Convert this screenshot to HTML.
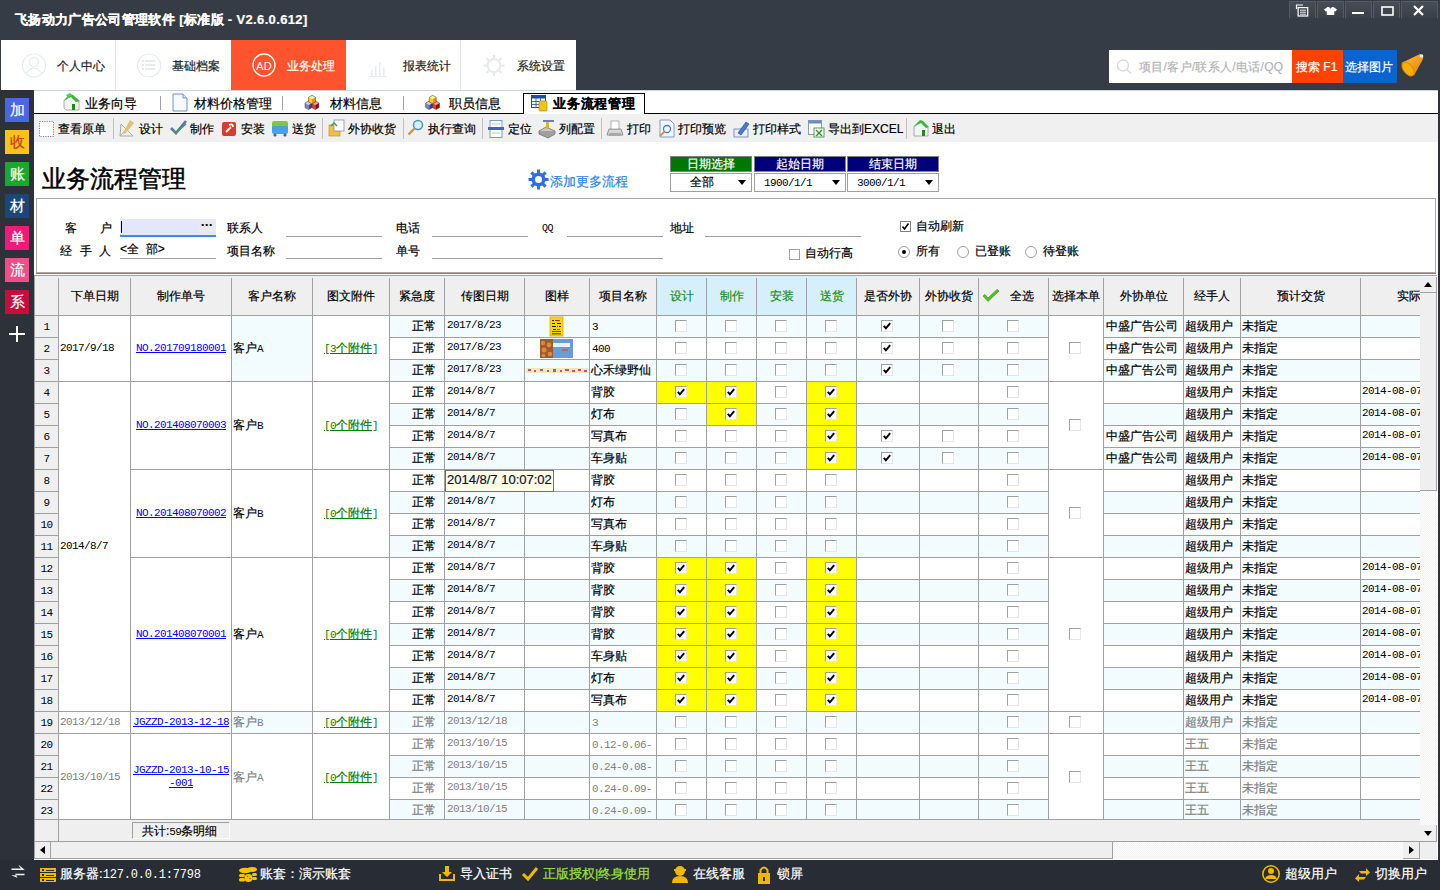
<!DOCTYPE html><html><head><meta charset="utf-8"><style>
*{box-sizing:border-box;margin:0;padding:0}
html,body{width:1440px;height:890px;overflow:hidden;background:#2c313a;font-family:"Liberation Sans",sans-serif;font-size:12px;color:#000;-webkit-text-stroke-width:0.2px}
.ab{position:absolute}
.m{font-family:"Liberation Mono",monospace;font-size:11px;letter-spacing:-0.6px;-webkit-text-stroke-width:0}
.t{position:absolute;white-space:nowrap;line-height:14px}
</style></head><body>

<div class="ab" style="left:0;top:0;width:1440px;height:90px;background:#363c46"></div>
<div class="t" style="left:15px;top:12px;color:#fff;font-weight:bold;font-size:13px;line-height:16px;letter-spacing:0.35px">飞扬动力广告公司管理软件 [标准版 - V2.6.0.612]</div>
<div class="ab" style="left:1289px;top:1px;width:27px;height:17px;border:1px solid #555b65;border-bottom:none;background:linear-gradient(#474d57,#394049)"></div>
<div class="ab" style="left:1317px;top:1px;width:27px;height:17px;border:1px solid #555b65;border-bottom:none;background:linear-gradient(#474d57,#394049)"></div>
<div class="ab" style="left:1345px;top:1px;width:27px;height:17px;border:1px solid #555b65;border-bottom:none;background:linear-gradient(#474d57,#394049)"></div>
<div class="ab" style="left:1373px;top:1px;width:27px;height:17px;border:1px solid #555b65;border-bottom:none;background:linear-gradient(#474d57,#394049)"></div>
<div class="ab" style="left:1401px;top:1px;width:37px;height:17px;border:1px solid #555b65;border-bottom:none;background:linear-gradient(#474d57,#394049)"></div>
<svg class="ab" style="left:1290px;top:0" width="150" height="22" viewBox="0 0 150 22">
<g fill="none" stroke="#fff" stroke-width="1.2">
<rect x="8.1" y="7.6" width="9.6" height="8.4"/><path d="M6.5 9 L6.5 5 L13 5"/></g>
<g stroke="#fff" stroke-width="0.9"><line x1="10" y1="10.2" x2="16" y2="10.2"/><line x1="10" y1="12.2" x2="16" y2="12.2"/><line x1="10" y1="14.2" x2="16" y2="14.2"/></g>
<path d="M34 9.5 L37.5 7 L39 7 L40.5 8.7 L42 7 L43.5 7 L47 9.5 L45.5 11.5 L44.3 11 L44.3 15 L36.7 15 L36.7 11 L35.5 11.5 Z" fill="#fff"/>
<rect x="62" y="12" width="12" height="2" fill="#fff"/>
<rect x="92" y="7" width="11" height="8" fill="none" stroke="#fff" stroke-width="1.6"/>
<path d="M124 6 L133 15 M133 6 L124 15" stroke="#fff" stroke-width="2.2"/>
</svg>
<div class="ab" style="left:1px;top:40px;width:575px;height:50px;background:#fff"></div>
<div class="t" style="left:57px;top:59px;font-size:12px;color:#222">个人中心</div>
<div class="ab" style="left:115px;top:40px;width:1px;height:50px;background:#e3e6ea"></div>
<div class="t" style="left:172px;top:59px;font-size:12px;color:#222">基础档案</div>
<div class="ab" style="left:231px;top:40px;width:115px;height:50px;background:#fe532d"></div>
<div class="t" style="left:287px;top:59px;font-size:12px;color:#fff">业务处理</div>
<div class="t" style="left:403px;top:59px;font-size:12px;color:#222">报表统计</div>
<div class="ab" style="left:460px;top:40px;width:1px;height:50px;background:#e3e6ea"></div>
<div class="t" style="left:517px;top:59px;font-size:12px;color:#222">系统设置</div>
<svg class="ab" style="left:0;top:40px" width="576" height="50" viewBox="0 0 576 50">
<g fill="none" stroke="#e6eaec" stroke-width="1.2">
<circle cx="34" cy="25.5" r="11.5"/><circle cx="34" cy="22" r="4.5"/><path d="M26.5 33 Q34 23 41.5 33"/>
<circle cx="149" cy="25.5" r="11.5"/>
</g>
<g fill="#e6eaec"><rect x="142" y="20" width="2" height="2"/><rect x="145" y="20" width="10" height="2"/><rect x="142" y="24" width="2" height="2"/><rect x="145" y="24" width="10" height="2"/><rect x="142" y="28" width="2" height="2"/><rect x="145" y="28" width="10" height="2"/></g>
<circle cx="264" cy="25" r="11" fill="none" stroke="#fff" stroke-width="1.3"/>
<text x="264" y="29.5" font-size="11" fill="#fff" text-anchor="middle" font-family="Liberation Sans">AD</text>
<g fill="#e8ecee"><rect x="371" y="30" width="1.5" height="6"/><rect x="375" y="26" width="1.5" height="10"/><rect x="379" y="22" width="1.5" height="14"/><rect x="383" y="27" width="1.5" height="9"/><rect x="369" y="36" width="18" height="1"/></g>
<g fill="none" stroke="#e6eaec" stroke-width="2"><circle cx="494" cy="25.5" r="6.5"/></g>
<g stroke="#e6eaec" stroke-width="2.2"><line x1="494" y1="15" x2="494" y2="18"/><line x1="494" y1="33" x2="494" y2="36"/><line x1="483.5" y1="25.5" x2="486.5" y2="25.5"/><line x1="501.5" y1="25.5" x2="504.5" y2="25.5"/><line x1="486.6" y1="18.1" x2="488.7" y2="20.2"/><line x1="499.3" y1="30.8" x2="501.4" y2="32.9"/><line x1="501.4" y1="18.1" x2="499.3" y2="20.2"/><line x1="488.7" y1="30.8" x2="486.6" y2="32.9"/></g>
</svg>
<div class="ab" style="left:1109px;top:50px;width:183px;height:33px;background:#fff"></div>
<svg class="ab" style="left:1115px;top:57px" width="20" height="20"><circle cx="8" cy="8.5" r="5.5" fill="none" stroke="#d8d8d8" stroke-width="1.3"/><line x1="12" y1="12.5" x2="16" y2="16.5" stroke="#d8d8d8" stroke-width="1.5"/></svg>
<div class="t" style="left:1139px;top:60px;color:#b4b4b4;font-size:12px;letter-spacing:0.3px">项目/客户/联系人/电话/QQ</div>
<div class="ab" style="left:1292px;top:50px;width:51px;height:33px;background:#ff4200"></div>
<div class="t" style="left:1296px;top:60px;color:#fff;font-size:12px">搜索 F1</div>
<div class="ab" style="left:1343px;top:50px;width:54px;height:33px;background:#0a64d0"></div>
<div class="t" style="left:1345px;top:60px;color:#fff;font-size:12px">选择图片</div>
<svg class="ab" style="left:1395px;top:45px" width="40" height="40" viewBox="0 0 40 40">
<defs><linearGradient id="mg" x1="0" y1="0" x2="1" y2="1"><stop offset="0" stop-color="#ffc640"/><stop offset="1" stop-color="#e87800"/></linearGradient></defs>
<path d="M6.5 18 L25 9 Q29 10 28 14 L19 30.5 Z" fill="url(#mg)"/>
<ellipse cx="13" cy="24" rx="8" ry="4.5" transform="rotate(52 13 24)" fill="#f7b000" stroke="#e08a00" stroke-width="1"/>
<circle cx="26.5" cy="11" r="1.8" fill="#e8eef8"/>
</svg>
<div class="ab" style="left:5px;top:98px;width:24px;height:24px;background:#4a66e0;color:#fff;font-size:15px;line-height:24px;text-align:center">加</div>
<div class="ab" style="left:5px;top:130px;width:24px;height:24px;background:#f7c21a;color:#c8391a;font-size:15px;line-height:24px;text-align:center">收</div>
<div class="ab" style="left:5px;top:162px;width:24px;height:24px;background:#18a82b;color:#fff;font-size:15px;line-height:24px;text-align:center">账</div>
<div class="ab" style="left:5px;top:194px;width:24px;height:24px;background:#1b4677;color:#fff;font-size:15px;line-height:24px;text-align:center">材</div>
<div class="ab" style="left:5px;top:226px;width:24px;height:24px;background:#ee1c78;color:#fff;font-size:15px;line-height:24px;text-align:center">单</div>
<div class="ab" style="left:5px;top:258px;width:24px;height:24px;background:#ee4f88;color:#fff;font-size:15px;line-height:24px;text-align:center">流</div>
<div class="ab" style="left:5px;top:290px;width:24px;height:24px;background:#c20f3c;color:#fff;font-size:15px;line-height:24px;text-align:center">系</div>
<div class="ab" style="left:9px;top:333px;width:16px;height:2px;background:#fff"></div>
<div class="ab" style="left:16px;top:326px;width:2px;height:16px;background:#fff"></div>
<div class="ab" style="left:34px;top:90px;width:1404px;height:770px;background:#fff"></div>
<div class="ab" style="left:34px;top:90px;width:1404px;height:1px;background:#c8d4e0"></div>
<div class="ab" style="left:34px;top:113px;width:1404px;height:1px;background:#000"></div>
<div class="t" style="left:85px;top:97px;font-size:13px">业务向导</div>
<div class="t" style="left:194px;top:97px;font-size:13px">材料价格管理</div>
<div class="t" style="left:330px;top:97px;font-size:13px">材料信息</div>
<div class="t" style="left:449px;top:97px;font-size:13px">职员信息</div>
<div class="ab" style="left:160px;top:96px;width:1px;height:14px;background:#a0a0a0"></div>
<div class="ab" style="left:282px;top:96px;width:1px;height:14px;background:#a0a0a0"></div>
<div class="ab" style="left:403px;top:96px;width:1px;height:14px;background:#a0a0a0"></div>
<div class="ab" style="left:523px;top:93px;width:122px;height:21px;background:#fff;border:1px solid #000;border-bottom:none"></div>
<div class="t" style="left:553px;top:97px;font-size:13px;font-weight:bold;letter-spacing:0.8px">业务流程管理</div>
<svg class="ab" style="left:0;top:90px" width="660" height="24" viewBox="0 0 660 24">
<path d="M64 11 L71 5 L79 11 L79 20 L66 20 L64 18 Z" fill="#f4f4f4" stroke="#9a9a9a" stroke-width="0.8"/>
<path d="M63 11 L70 4 L73 5 L80 11 L76 12 L71 7 Z" fill="#3cb43c"/><path d="M66 5 L70 3 L72 5 L68 8Z" fill="#52d052"/>
<rect x="72" y="14" width="3" height="6" fill="#1e8a1e"/>
<path d="M173 4 L183 4 L187 8 L187 21 L173 21 Z" fill="#f6f9ff" stroke="#5b83c6" stroke-width="0.9"/><path d="M183 4 L183 8 L187 8" fill="#dbe6f8" stroke="#5b83c6" stroke-width="0.8"/>
<g><path d="M308.5 11 L312.0 13 L308.5 15 L305.0 13Z" fill="#d0d0f0"/><path d="M305.0 13 L308.5 15 L308.5 19.6 L305.0 17.6Z" fill="#8080c8"/><path d="M308.5 15 L312.0 13 L312.0 17.6 L308.5 19.6Z" fill="#404090"/><path d="M308.5 11 L312.0 13 L312.0 17.6 L308.5 19.6 L305.0 17.6 L305.0 13Z" fill="none" stroke="#303030" stroke-width="0.5"/><path d="M315.3 11 L318.8 13 L315.3 15 L311.8 13Z" fill="#f0a0a0"/><path d="M311.8 13 L315.3 15 L315.3 19.6 L311.8 17.6Z" fill="#d04040"/><path d="M315.3 15 L318.8 13 L318.8 17.6 L315.3 19.6Z" fill="#a00000"/><path d="M315.3 11 L318.8 13 L318.8 17.6 L315.3 19.6 L311.8 17.6 L311.8 13Z" fill="none" stroke="#303030" stroke-width="0.5"/><path d="M312 5.3 L315.5 7.3 L312 9.3 L308.5 7.3Z" fill="#fff0a0"/><path d="M308.5 7.3 L312 9.3 L312 13.899999999999999 L308.5 11.899999999999999Z" fill="#f8d000"/><path d="M312 9.3 L315.5 7.3 L315.5 11.899999999999999 L312 13.899999999999999Z" fill="#f09010"/><path d="M312 5.3 L315.5 7.3 L315.5 11.899999999999999 L312 13.899999999999999 L308.5 11.899999999999999 L308.5 7.3Z" fill="none" stroke="#303030" stroke-width="0.5"/></g>
<g><path d="M429.2 11 L432.7 13 L429.2 15 L425.7 13Z" fill="#d0d0f0"/><path d="M425.7 13 L429.2 15 L429.2 19.6 L425.7 17.6Z" fill="#8080c8"/><path d="M429.2 15 L432.7 13 L432.7 17.6 L429.2 19.6Z" fill="#404090"/><path d="M429.2 11 L432.7 13 L432.7 17.6 L429.2 19.6 L425.7 17.6 L425.7 13Z" fill="none" stroke="#303030" stroke-width="0.5"/><path d="M436.0 11 L439.5 13 L436.0 15 L432.5 13Z" fill="#f0a0a0"/><path d="M432.5 13 L436.0 15 L436.0 19.6 L432.5 17.6Z" fill="#d04040"/><path d="M436.0 15 L439.5 13 L439.5 17.6 L436.0 19.6Z" fill="#a00000"/><path d="M436.0 11 L439.5 13 L439.5 17.6 L436.0 19.6 L432.5 17.6 L432.5 13Z" fill="none" stroke="#303030" stroke-width="0.5"/><path d="M432.7 5.3 L436.2 7.3 L432.7 9.3 L429.2 7.3Z" fill="#fff0a0"/><path d="M429.2 7.3 L432.7 9.3 L432.7 13.899999999999999 L429.2 11.899999999999999Z" fill="#f8d000"/><path d="M432.7 9.3 L436.2 7.3 L436.2 11.899999999999999 L432.7 13.899999999999999Z" fill="#f09010"/><path d="M432.7 5.3 L436.2 7.3 L436.2 11.899999999999999 L432.7 13.899999999999999 L429.2 11.899999999999999 L429.2 7.3Z" fill="none" stroke="#303030" stroke-width="0.5"/></g>
<rect x="531.5" y="5.5" width="14" height="12" fill="#fff" stroke="#1a4fa0" stroke-width="1"/><rect x="531.5" y="5.5" width="14" height="3" fill="#1a4fa0"/>
<g stroke="#1a4fa0" stroke-width="0.8"><line x1="536" y1="8" x2="536" y2="17"/><line x1="540.5" y1="8" x2="540.5" y2="17"/><line x1="532" y1="11.5" x2="545" y2="11.5"/><line x1="532" y1="14.5" x2="545" y2="14.5"/></g>
<rect x="539" y="11" width="8" height="10" rx="1" fill="#f2c318" stroke="#b08000" stroke-width="0.6"/>
</svg>
<div class="ab" style="left:34px;top:114px;width:1404px;height:28px;background:#f0f0f0"></div>
<div class="t" style="left:58px;top:122px;font-size:12px">查看原单</div>
<div class="t" style="left:139px;top:122px;font-size:12px">设计</div>
<div class="t" style="left:190px;top:122px;font-size:12px">制作</div>
<div class="t" style="left:241px;top:122px;font-size:12px">安装</div>
<div class="t" style="left:292px;top:122px;font-size:12px">送货</div>
<div class="t" style="left:348px;top:122px;font-size:12px">外协收货</div>
<div class="t" style="left:428px;top:122px;font-size:12px">执行查询</div>
<div class="t" style="left:508px;top:122px;font-size:12px">定位</div>
<div class="t" style="left:559px;top:122px;font-size:12px">列配置</div>
<div class="t" style="left:627px;top:122px;font-size:12px">打印</div>
<div class="t" style="left:678px;top:122px;font-size:12px">打印预览</div>
<div class="t" style="left:753px;top:122px;font-size:12px">打印样式</div>
<div class="t" style="left:828px;top:122px;font-size:12px">导出到EXCEL</div>
<div class="t" style="left:932px;top:122px;font-size:12px">退出</div>
<div class="ab" style="left:113px;top:118px;width:1px;height:21px;background:#c0c0c0"></div>
<div class="ab" style="left:322px;top:118px;width:1px;height:21px;background:#c0c0c0"></div>
<div class="ab" style="left:403px;top:118px;width:1px;height:21px;background:#c0c0c0"></div>
<div class="ab" style="left:482px;top:118px;width:1px;height:21px;background:#c0c0c0"></div>
<div class="ab" style="left:601px;top:118px;width:1px;height:21px;background:#c0c0c0"></div>
<div class="ab" style="left:906px;top:118px;width:1px;height:21px;background:#c0c0c0"></div>
<svg class="ab" style="left:0;top:114px" width="960" height="28" viewBox="0 0 960 28">
<rect x="39.5" y="7.5" width="14" height="15" fill="#fff" stroke="#7080c0" stroke-width="1" stroke-dasharray="1.2 1.2"/>
<path d="M120 22 L133 8 M121 10 L133 22 L120 22 Z" fill="none" stroke="#a8a8a8" stroke-width="1"/><path d="M130 6 L134 9 L126 19 L123 20 L124 17Z" fill="#e6c070"/>
<path d="M171 14 L176 19 L186 7" fill="none" stroke="#5a6cc8" stroke-width="2.6"/><path d="M173 16 L176 19 L186 10" fill="none" stroke="#3ea83e" stroke-width="1.6"/>
<rect x="222" y="8" width="14" height="14" rx="2" fill="#d83c2c"/><path d="M226 18 L231 13 M229 11 Q233 9 233 13" stroke="#fff" stroke-width="1.8" fill="none"/>
<rect x="272" y="7" width="16" height="10" rx="2" fill="#7ac84a"/><rect x="272" y="12" width="16" height="8" rx="2" fill="#4aa0e0"/><circle cx="275" cy="21" r="1.6" fill="#3070a0"/><circle cx="285" cy="21" r="1.6" fill="#3070a0"/>
<rect x="329" y="11" width="11" height="11" fill="#f0c040" stroke="#c09020" stroke-width="0.7"/><rect x="334" y="6" width="10" height="11" fill="#fff" stroke="#8090b0" stroke-width="0.8"/><path d="M331 12 L334 9 L337 12" stroke="#40a040" stroke-width="1.4" fill="none"/>
<circle cx="418" cy="11" r="4.5" fill="#dcefff" stroke="#4a90d0" stroke-width="1.5"/><line x1="414.5" y1="14.5" x2="408.5" y2="20.5" stroke="#e09030" stroke-width="2.4"/>
<rect x="490" y="6.5" width="12" height="17" fill="#fff" stroke="#7090c8" stroke-width="0.9"/><rect x="488" y="13" width="16" height="3" fill="#3a68c0"/><g stroke="#a0b4d8" stroke-width="0.8"><line x1="492" y1="10" x2="500" y2="10"/><line x1="492" y1="19" x2="500" y2="19"/></g>
<path d="M539 17 L546 13 L555 17 L548 21 Z" fill="#c8c8c8" stroke="#707070" stroke-width="0.8"/><path d="M539 17 L539 20 L548 24 L555 20 L555 17" fill="#a0a0a0" stroke="#707070" stroke-width="0.8"/><rect x="543" y="6" width="11" height="2" fill="#6080c0"/><rect x="546" y="8" width="3" height="7" fill="#e0b030"/>
<path d="M609 15 L621 15 L623 21 L607 21 Z" fill="#d8d8d8" stroke="#808080" stroke-width="0.8"/><rect x="611" y="7" width="8" height="8" fill="#fff" stroke="#909090" stroke-width="0.7"/><rect x="609" y="19" width="12" height="3" fill="#a8a8a8"/>
<path d="M660 6 L670 6 L674 10 L674 23 L660 23 Z" fill="#f4f8ff" stroke="#7090c0" stroke-width="0.9"/><circle cx="667" cy="15" r="3.5" fill="none" stroke="#4080c0" stroke-width="1.3"/><line x1="664.5" y1="17.5" x2="660" y2="22" stroke="#e09030" stroke-width="1.8"/>
<rect x="734" y="15" width="14" height="8" fill="#e8eef8" stroke="#6080b0" stroke-width="0.8"/><path d="M738 19 L746 8 L749 10 L741 21 Z" fill="#4a7ad8" stroke="#204080" stroke-width="0.6"/>
<rect x="808.5" y="6.5" width="13" height="14" fill="#fff" stroke="#8094b0" stroke-width="0.9"/><rect x="808.5" y="6.5" width="13" height="3" fill="#6a8cc0"/><rect x="814" y="14" width="10" height="9" fill="#fff" stroke="#3a9a3a" stroke-width="0.9"/><path d="M816 16 L822 22 M822 16 L816 22" stroke="#2a8a2a" stroke-width="1.2"/>
<path d="M914 13 L921 7 L928 13 L928 22 L914 22 Z" fill="#f4f4f4" stroke="#9a9a9a" stroke-width="0.8"/><path d="M913 13 L920 6 L923 7 L929 13 L926 14 L921 9 Z" fill="#3cb43c"/><rect x="922" y="16" width="3" height="6" fill="#1e8a1e"/>
</svg>
<div class="t" style="left:42px;top:164px;font-size:24px;line-height:30px;-webkit-text-stroke-width:0.5px">业务流程管理</div>
<svg class="ab" style="left:528px;top:169px" width="21" height="21" viewBox="0 0 21 21">
<g fill="#2f6fe0"><circle cx="10.5" cy="10.5" r="7"/>
<g stroke="#2f6fe0" stroke-width="3"><line x1="10.5" y1="0.5" x2="10.5" y2="20.5"/><line x1="0.5" y1="10.5" x2="20.5" y2="10.5"/><line x1="3.4" y1="3.4" x2="17.6" y2="17.6"/><line x1="17.6" y1="3.4" x2="3.4" y2="17.6"/></g></g>
<circle cx="10.5" cy="10.5" r="3.5" fill="#fff"/></svg>
<div class="t" style="left:550px;top:175px;font-size:13px;color:#2a86e6">添加更多流程</div>
<div class="ab" style="left:670px;top:156px;width:82px;height:16px;background:#007800;border:1px solid #808080;color:#fff;text-align:center;font-size:12px;line-height:14px">日期选择</div>
<div class="ab" style="left:670px;top:173px;width:82px;height:19px;background:#fff;border:1px solid #a0a0a0"></div>
<div class="t" style="left:690px;top:175px;font-size:12px">全部</div>
<div class="ab" style="left:738px;top:180px;width:0;height:0;border-left:4.5px solid transparent;border-right:4.5px solid transparent;border-top:5px solid #000"></div>
<div class="ab" style="left:754px;top:156px;width:92px;height:16px;background:#000078;border:1px solid #808080;color:#fff;text-align:center;font-size:12px;line-height:14px">起始日期</div>
<div class="ab" style="left:754px;top:173px;width:92px;height:19px;background:#fff;border:1px solid #a0a0a0"></div>
<div class="t m" style="left:764px;top:176px;font-size:11px">1900/1/1</div>
<div class="ab" style="left:832px;top:180px;width:0;height:0;border-left:4.5px solid transparent;border-right:4.5px solid transparent;border-top:5px solid #000"></div>
<div class="ab" style="left:847px;top:156px;width:92px;height:16px;background:#000078;border:1px solid #808080;color:#fff;text-align:center;font-size:12px;line-height:14px">结束日期</div>
<div class="ab" style="left:847px;top:173px;width:92px;height:19px;background:#fff;border:1px solid #a0a0a0"></div>
<div class="t m" style="left:857px;top:176px;font-size:11px">3000/1/1</div>
<div class="ab" style="left:925px;top:180px;width:0;height:0;border-left:4.5px solid transparent;border-right:4.5px solid transparent;border-top:5px solid #000"></div>
<div class="ab" style="left:36px;top:198px;width:1400px;height:75px;border:1px solid #a8a8a8;border-bottom-color:#b0a89c"></div>
<div class="ab" style="left:36px;top:273px;width:1400px;height:1px;background:#3a8ee6"></div>
<div class="t" style="left:65px;top:221px">客</div><div class="t" style="left:100px;top:221px">户</div>
<div class="ab" style="left:120px;top:219px;width:96px;height:18px;background:#e3e7fb;border-bottom:2px solid #3a8ee6"></div>
<div class="ab" style="left:199px;top:219px;width:17px;height:16px;background:#e8eaf0"></div>
<div class="t" style="left:201px;top:218px;font-weight:bold;font-size:12px">···</div>
<div class="ab" style="left:121px;top:221px;width:1px;height:12px;background:#000"></div>
<div class="t" style="left:60px;top:244px">经</div><div class="t" style="left:80px;top:244px">手</div><div class="t" style="left:99px;top:244px">人</div>
<div class="t" style="left:120px;top:242px">&lt;全&nbsp;&nbsp;部&gt;</div>
<div class="t" style="left:227px;top:221px">联系人</div>
<div class="t" style="left:227px;top:244px">项目名称</div>
<div class="t" style="left:396px;top:221px">电话</div>
<div class="t" style="left:396px;top:244px">单号</div>
<div class="t" style="left:670px;top:221px">地址</div>
<div class="t m" style="left:542px;top:222px;font-size:10px">QQ</div>
<div class="ab" style="left:120px;top:258px;width:96px;height:1px;background:#a0a0a0"></div>
<div class="ab" style="left:286px;top:236px;width:96px;height:1px;background:#a0a0a0"></div>
<div class="ab" style="left:286px;top:258px;width:96px;height:1px;background:#a0a0a0"></div>
<div class="ab" style="left:432px;top:236px;width:96px;height:1px;background:#a0a0a0"></div>
<div class="ab" style="left:567px;top:236px;width:96px;height:1px;background:#a0a0a0"></div>
<div class="ab" style="left:705px;top:236px;width:156px;height:1px;background:#a0a0a0"></div>
<div class="ab" style="left:432px;top:258px;width:231px;height:1px;background:#a0a0a0"></div>
<div class="ab" style="left:900px;top:221px;width:11px;height:11px;border:1px solid #808080;background:#fff"></div>
<svg class="ab" style="left:900px;top:221px" width="11" height="11"><path d="M2.5 5.5 L4.5 8 L8.5 2.5" fill="none" stroke="#000" stroke-width="1.6"/></svg>
<div class="t" style="left:916px;top:219px">自动刷新</div>
<div class="ab" style="left:789px;top:249px;width:11px;height:11px;border:1px solid #a0a0a0;background:#fff"></div>
<div class="t" style="left:805px;top:246px">自动行高</div>
<div class="ab" style="left:898px;top:246px;width:12px;height:12px;border-radius:50%;border:1px solid #a0a0a0;background:#fff"></div>
<div class="ab" style="left:902px;top:250px;width:4px;height:4px;border-radius:50%;background:#000"></div>
<div class="t" style="left:916px;top:244px">所有</div>
<div class="ab" style="left:957px;top:246px;width:12px;height:12px;border-radius:50%;border:1px solid #a0a0a0;background:#fff"></div>
<div class="t" style="left:975px;top:244px">已登账</div>
<div class="ab" style="left:1025px;top:246px;width:12px;height:12px;border-radius:50%;border:1px solid #a0a0a0;background:#fff"></div>
<div class="t" style="left:1043px;top:244px">待登账</div>
<div class="ab" style="left:34px;top:275px;width:1403px;height:1px;background:#a0a0a0"></div>
<div class="ab" style="left:34px;top:275px;width:1px;height:584px;background:#a0a0a0"></div>
<div class="ab" style="left:35px;top:276px;width:1385px;height:39px;background:#efefef"></div>
<div class="ab" style="left:657px;top:276px;width:199px;height:39px;background:#d5f0fb"></div>
<div class="ab" style="left:59px;top:289px;width:71px;text-align:center;line-height:14px;color:#000;white-space:nowrap">下单日期</div>
<div class="ab" style="left:131px;top:289px;width:100px;text-align:center;line-height:14px;color:#000;white-space:nowrap">制作单号</div>
<div class="ab" style="left:232px;top:289px;width:80px;text-align:center;line-height:14px;color:#000;white-space:nowrap">客户名称</div>
<div class="ab" style="left:313px;top:289px;width:76px;text-align:center;line-height:14px;color:#000;white-space:nowrap">图文附件</div>
<div class="ab" style="left:390px;top:289px;width:54px;text-align:center;line-height:14px;color:#000;white-space:nowrap">紧急度</div>
<div class="ab" style="left:445px;top:289px;width:79px;text-align:center;line-height:14px;color:#000;white-space:nowrap">传图日期</div>
<div class="ab" style="left:525px;top:289px;width:64px;text-align:center;line-height:14px;color:#000;white-space:nowrap">图样</div>
<div class="ab" style="left:590px;top:289px;width:66px;text-align:center;line-height:14px;color:#000;white-space:nowrap">项目名称</div>
<div class="ab" style="left:657px;top:289px;width:49px;text-align:center;line-height:14px;color:#1e8c1e;white-space:nowrap">设计</div>
<div class="ab" style="left:707px;top:289px;width:49px;text-align:center;line-height:14px;color:#1e8c1e;white-space:nowrap">制作</div>
<div class="ab" style="left:757px;top:289px;width:49px;text-align:center;line-height:14px;color:#1e8c1e;white-space:nowrap">安装</div>
<div class="ab" style="left:807px;top:289px;width:49px;text-align:center;line-height:14px;color:#1e8c1e;white-space:nowrap">送货</div>
<div class="ab" style="left:857px;top:289px;width:62px;text-align:center;line-height:14px;color:#000;white-space:nowrap">是否外协</div>
<div class="ab" style="left:920px;top:289px;width:58px;text-align:center;line-height:14px;color:#000;white-space:nowrap">外协收货</div>
<div class="t" style="left:1010px;top:289px">全选</div>
<svg class="ab" style="left:982px;top:289px" width="18" height="15" viewBox="0 0 18 15"><path d="M1 7 L6 12.5 L17 2 L15 0.5 L6 9 L3 5.5 Z" fill="#52c41a" stroke="#2e8a10" stroke-width="0.6"/></svg>
<div class="ab" style="left:1049px;top:289px;width:54px;text-align:center;line-height:14px;color:#000;white-space:nowrap">选择本单</div>
<div class="ab" style="left:1104px;top:289px;width:79px;text-align:center;line-height:14px;color:#000;white-space:nowrap">外协单位</div>
<div class="ab" style="left:1184px;top:289px;width:56px;text-align:center;line-height:14px;color:#000;white-space:nowrap">经手人</div>
<div class="ab" style="left:1241px;top:289px;width:119px;text-align:center;line-height:14px;color:#000;white-space:nowrap">预计交货</div>
<div class="ab" style="left:1361px;top:276px;width:59px;height:39px;overflow:hidden"><div class="t" style="left:36px;top:13px">实际交货</div></div>
<div class="ab" style="left:58px;top:278px;width:1px;height:37px;background:#a0a0a0"></div>
<div class="ab" style="left:130px;top:278px;width:1px;height:37px;background:#a0a0a0"></div>
<div class="ab" style="left:231px;top:278px;width:1px;height:37px;background:#a0a0a0"></div>
<div class="ab" style="left:312px;top:278px;width:1px;height:37px;background:#a0a0a0"></div>
<div class="ab" style="left:389px;top:278px;width:1px;height:37px;background:#a0a0a0"></div>
<div class="ab" style="left:444px;top:278px;width:1px;height:37px;background:#a0a0a0"></div>
<div class="ab" style="left:524px;top:278px;width:1px;height:37px;background:#a0a0a0"></div>
<div class="ab" style="left:589px;top:278px;width:1px;height:37px;background:#a0a0a0"></div>
<div class="ab" style="left:656px;top:278px;width:1px;height:37px;background:#a0a0a0"></div>
<div class="ab" style="left:706px;top:278px;width:1px;height:37px;background:#a0a0a0"></div>
<div class="ab" style="left:756px;top:278px;width:1px;height:37px;background:#a0a0a0"></div>
<div class="ab" style="left:806px;top:278px;width:1px;height:37px;background:#a0a0a0"></div>
<div class="ab" style="left:856px;top:278px;width:1px;height:37px;background:#a0a0a0"></div>
<div class="ab" style="left:919px;top:278px;width:1px;height:37px;background:#a0a0a0"></div>
<div class="ab" style="left:978px;top:278px;width:1px;height:37px;background:#a0a0a0"></div>
<div class="ab" style="left:1048px;top:278px;width:1px;height:37px;background:#a0a0a0"></div>
<div class="ab" style="left:1103px;top:278px;width:1px;height:37px;background:#a0a0a0"></div>
<div class="ab" style="left:1183px;top:278px;width:1px;height:37px;background:#a0a0a0"></div>
<div class="ab" style="left:1240px;top:278px;width:1px;height:37px;background:#a0a0a0"></div>
<div class="ab" style="left:1360px;top:278px;width:1px;height:37px;background:#a0a0a0"></div>
<div class="ab" style="left:34px;top:315px;width:1386px;height:1px;background:#a0a0a0"></div>
<div class="ab" style="left:35px;top:316px;width:1385px;height:503px;overflow:hidden;background:#fff">
<div class="ab" style="left:355px;top:0px;width:658px;height:21px;background:#f2fbfe"></div>
<div class="ab" style="left:1069px;top:0px;width:316px;height:21px;background:#f2fbfe"></div>
<div class="ab" style="left:355px;top:44px;width:658px;height:21px;background:#f2fbfe"></div>
<div class="ab" style="left:1069px;top:44px;width:316px;height:21px;background:#f2fbfe"></div>
<div class="ab" style="left:622px;top:66px;width:49px;height:21px;background:#ffff00"></div>
<div class="ab" style="left:672px;top:66px;width:49px;height:21px;background:#ffff00"></div>
<div class="ab" style="left:772px;top:66px;width:49px;height:21px;background:#ffff00"></div>
<div class="ab" style="left:355px;top:88px;width:658px;height:21px;background:#f2fbfe"></div>
<div class="ab" style="left:1069px;top:88px;width:316px;height:21px;background:#f2fbfe"></div>
<div class="ab" style="left:672px;top:88px;width:49px;height:21px;background:#ffff00"></div>
<div class="ab" style="left:772px;top:88px;width:49px;height:21px;background:#ffff00"></div>
<div class="ab" style="left:772px;top:110px;width:49px;height:21px;background:#ffff00"></div>
<div class="ab" style="left:355px;top:132px;width:658px;height:21px;background:#f2fbfe"></div>
<div class="ab" style="left:1069px;top:132px;width:316px;height:21px;background:#f2fbfe"></div>
<div class="ab" style="left:772px;top:132px;width:49px;height:21px;background:#ffff00"></div>
<div class="ab" style="left:355px;top:176px;width:658px;height:21px;background:#f2fbfe"></div>
<div class="ab" style="left:1069px;top:176px;width:316px;height:21px;background:#f2fbfe"></div>
<div class="ab" style="left:355px;top:220px;width:658px;height:21px;background:#f2fbfe"></div>
<div class="ab" style="left:1069px;top:220px;width:316px;height:21px;background:#f2fbfe"></div>
<div class="ab" style="left:622px;top:242px;width:49px;height:21px;background:#ffff00"></div>
<div class="ab" style="left:672px;top:242px;width:49px;height:21px;background:#ffff00"></div>
<div class="ab" style="left:772px;top:242px;width:49px;height:21px;background:#ffff00"></div>
<div class="ab" style="left:355px;top:264px;width:658px;height:21px;background:#f2fbfe"></div>
<div class="ab" style="left:1069px;top:264px;width:316px;height:21px;background:#f2fbfe"></div>
<div class="ab" style="left:622px;top:264px;width:49px;height:21px;background:#ffff00"></div>
<div class="ab" style="left:672px;top:264px;width:49px;height:21px;background:#ffff00"></div>
<div class="ab" style="left:772px;top:264px;width:49px;height:21px;background:#ffff00"></div>
<div class="ab" style="left:622px;top:286px;width:49px;height:21px;background:#ffff00"></div>
<div class="ab" style="left:672px;top:286px;width:49px;height:21px;background:#ffff00"></div>
<div class="ab" style="left:772px;top:286px;width:49px;height:21px;background:#ffff00"></div>
<div class="ab" style="left:355px;top:308px;width:658px;height:21px;background:#f2fbfe"></div>
<div class="ab" style="left:1069px;top:308px;width:316px;height:21px;background:#f2fbfe"></div>
<div class="ab" style="left:622px;top:308px;width:49px;height:21px;background:#ffff00"></div>
<div class="ab" style="left:672px;top:308px;width:49px;height:21px;background:#ffff00"></div>
<div class="ab" style="left:772px;top:308px;width:49px;height:21px;background:#ffff00"></div>
<div class="ab" style="left:622px;top:330px;width:49px;height:21px;background:#ffff00"></div>
<div class="ab" style="left:672px;top:330px;width:49px;height:21px;background:#ffff00"></div>
<div class="ab" style="left:772px;top:330px;width:49px;height:21px;background:#ffff00"></div>
<div class="ab" style="left:355px;top:352px;width:658px;height:21px;background:#f2fbfe"></div>
<div class="ab" style="left:1069px;top:352px;width:316px;height:21px;background:#f2fbfe"></div>
<div class="ab" style="left:622px;top:352px;width:49px;height:21px;background:#ffff00"></div>
<div class="ab" style="left:672px;top:352px;width:49px;height:21px;background:#ffff00"></div>
<div class="ab" style="left:772px;top:352px;width:49px;height:21px;background:#ffff00"></div>
<div class="ab" style="left:622px;top:374px;width:49px;height:21px;background:#ffff00"></div>
<div class="ab" style="left:672px;top:374px;width:49px;height:21px;background:#ffff00"></div>
<div class="ab" style="left:772px;top:374px;width:49px;height:21px;background:#ffff00"></div>
<div class="ab" style="left:355px;top:396px;width:658px;height:21px;background:#f2fbfe"></div>
<div class="ab" style="left:1069px;top:396px;width:316px;height:21px;background:#f2fbfe"></div>
<div class="ab" style="left:355px;top:440px;width:658px;height:21px;background:#f2fbfe"></div>
<div class="ab" style="left:1069px;top:440px;width:316px;height:21px;background:#f2fbfe"></div>
<div class="ab" style="left:355px;top:484px;width:658px;height:21px;background:#f2fbfe"></div>
<div class="ab" style="left:1069px;top:484px;width:316px;height:21px;background:#f2fbfe"></div>
<div class="ab" style="left:197px;top:0px;width:80px;height:65px;background:#f2fbfe"></div>
<div class="ab" style="left:197px;top:396px;width:80px;height:21px;background:#f2fbfe"></div>
<div class="ab" style="left:0px;top:0px;width:23px;height:503px;background:#efefef"></div>
<div class="ab" style="left:-1px;top:21px;width:24px;height:1px;background:#a0a0a0"></div>
<div class="ab" style="left:354px;top:21px;width:56px;height:1px;background:#a0a0a0"></div>
<div class="ab" style="left:409px;top:21px;width:81px;height:1px;background:#a0a0a0"></div>
<div class="ab" style="left:489px;top:21px;width:66px;height:1px;background:#a0a0a0"></div>
<div class="ab" style="left:554px;top:21px;width:68px;height:1px;background:#a0a0a0"></div>
<div class="ab" style="left:621px;top:21px;width:51px;height:1px;background:#a0a0a0"></div>
<div class="ab" style="left:671px;top:21px;width:51px;height:1px;background:#a0a0a0"></div>
<div class="ab" style="left:721px;top:21px;width:51px;height:1px;background:#a0a0a0"></div>
<div class="ab" style="left:771px;top:21px;width:51px;height:1px;background:#a0a0a0"></div>
<div class="ab" style="left:821px;top:21px;width:64px;height:1px;background:#a0a0a0"></div>
<div class="ab" style="left:884px;top:21px;width:60px;height:1px;background:#a0a0a0"></div>
<div class="ab" style="left:943px;top:21px;width:71px;height:1px;background:#a0a0a0"></div>
<div class="ab" style="left:1068px;top:21px;width:81px;height:1px;background:#a0a0a0"></div>
<div class="ab" style="left:1148px;top:21px;width:58px;height:1px;background:#a0a0a0"></div>
<div class="ab" style="left:1205px;top:21px;width:121px;height:1px;background:#a0a0a0"></div>
<div class="ab" style="left:1325px;top:21px;width:61px;height:1px;background:#a0a0a0"></div>
<div class="ab" style="left:-1px;top:43px;width:24px;height:1px;background:#a0a0a0"></div>
<div class="ab" style="left:354px;top:43px;width:56px;height:1px;background:#a0a0a0"></div>
<div class="ab" style="left:409px;top:43px;width:81px;height:1px;background:#a0a0a0"></div>
<div class="ab" style="left:489px;top:43px;width:66px;height:1px;background:#a0a0a0"></div>
<div class="ab" style="left:554px;top:43px;width:68px;height:1px;background:#a0a0a0"></div>
<div class="ab" style="left:621px;top:43px;width:51px;height:1px;background:#a0a0a0"></div>
<div class="ab" style="left:671px;top:43px;width:51px;height:1px;background:#a0a0a0"></div>
<div class="ab" style="left:721px;top:43px;width:51px;height:1px;background:#a0a0a0"></div>
<div class="ab" style="left:771px;top:43px;width:51px;height:1px;background:#a0a0a0"></div>
<div class="ab" style="left:821px;top:43px;width:64px;height:1px;background:#a0a0a0"></div>
<div class="ab" style="left:884px;top:43px;width:60px;height:1px;background:#a0a0a0"></div>
<div class="ab" style="left:943px;top:43px;width:71px;height:1px;background:#a0a0a0"></div>
<div class="ab" style="left:1068px;top:43px;width:81px;height:1px;background:#a0a0a0"></div>
<div class="ab" style="left:1148px;top:43px;width:58px;height:1px;background:#a0a0a0"></div>
<div class="ab" style="left:1205px;top:43px;width:121px;height:1px;background:#a0a0a0"></div>
<div class="ab" style="left:1325px;top:43px;width:61px;height:1px;background:#a0a0a0"></div>
<div class="ab" style="left:-1px;top:65px;width:24px;height:1px;background:#a0a0a0"></div>
<div class="ab" style="left:23px;top:65px;width:73px;height:1px;background:#a0a0a0"></div>
<div class="ab" style="left:95px;top:65px;width:102px;height:1px;background:#a0a0a0"></div>
<div class="ab" style="left:196px;top:65px;width:82px;height:1px;background:#a0a0a0"></div>
<div class="ab" style="left:277px;top:65px;width:78px;height:1px;background:#a0a0a0"></div>
<div class="ab" style="left:354px;top:65px;width:56px;height:1px;background:#a0a0a0"></div>
<div class="ab" style="left:409px;top:65px;width:81px;height:1px;background:#a0a0a0"></div>
<div class="ab" style="left:489px;top:65px;width:66px;height:1px;background:#a0a0a0"></div>
<div class="ab" style="left:554px;top:65px;width:68px;height:1px;background:#a0a0a0"></div>
<div class="ab" style="left:621px;top:65px;width:51px;height:1px;background:#a0a0a0"></div>
<div class="ab" style="left:671px;top:65px;width:51px;height:1px;background:#a0a0a0"></div>
<div class="ab" style="left:721px;top:65px;width:51px;height:1px;background:#a0a0a0"></div>
<div class="ab" style="left:771px;top:65px;width:51px;height:1px;background:#a0a0a0"></div>
<div class="ab" style="left:821px;top:65px;width:64px;height:1px;background:#a0a0a0"></div>
<div class="ab" style="left:884px;top:65px;width:60px;height:1px;background:#a0a0a0"></div>
<div class="ab" style="left:943px;top:65px;width:71px;height:1px;background:#a0a0a0"></div>
<div class="ab" style="left:1013px;top:65px;width:56px;height:1px;background:#a0a0a0"></div>
<div class="ab" style="left:1068px;top:65px;width:81px;height:1px;background:#a0a0a0"></div>
<div class="ab" style="left:1148px;top:65px;width:58px;height:1px;background:#a0a0a0"></div>
<div class="ab" style="left:1205px;top:65px;width:121px;height:1px;background:#a0a0a0"></div>
<div class="ab" style="left:1325px;top:65px;width:61px;height:1px;background:#a0a0a0"></div>
<div class="ab" style="left:-1px;top:87px;width:24px;height:1px;background:#a0a0a0"></div>
<div class="ab" style="left:354px;top:87px;width:56px;height:1px;background:#a0a0a0"></div>
<div class="ab" style="left:409px;top:87px;width:81px;height:1px;background:#a0a0a0"></div>
<div class="ab" style="left:489px;top:87px;width:66px;height:1px;background:#a0a0a0"></div>
<div class="ab" style="left:554px;top:87px;width:68px;height:1px;background:#a0a0a0"></div>
<div class="ab" style="left:621px;top:87px;width:51px;height:1px;background:#a0a0a0"></div>
<div class="ab" style="left:671px;top:87px;width:51px;height:1px;background:#a0a0a0"></div>
<div class="ab" style="left:721px;top:87px;width:51px;height:1px;background:#a0a0a0"></div>
<div class="ab" style="left:771px;top:87px;width:51px;height:1px;background:#a0a0a0"></div>
<div class="ab" style="left:821px;top:87px;width:64px;height:1px;background:#a0a0a0"></div>
<div class="ab" style="left:884px;top:87px;width:60px;height:1px;background:#a0a0a0"></div>
<div class="ab" style="left:943px;top:87px;width:71px;height:1px;background:#a0a0a0"></div>
<div class="ab" style="left:1068px;top:87px;width:81px;height:1px;background:#a0a0a0"></div>
<div class="ab" style="left:1148px;top:87px;width:58px;height:1px;background:#a0a0a0"></div>
<div class="ab" style="left:1205px;top:87px;width:121px;height:1px;background:#a0a0a0"></div>
<div class="ab" style="left:1325px;top:87px;width:61px;height:1px;background:#a0a0a0"></div>
<div class="ab" style="left:-1px;top:109px;width:24px;height:1px;background:#a0a0a0"></div>
<div class="ab" style="left:354px;top:109px;width:56px;height:1px;background:#a0a0a0"></div>
<div class="ab" style="left:409px;top:109px;width:81px;height:1px;background:#a0a0a0"></div>
<div class="ab" style="left:489px;top:109px;width:66px;height:1px;background:#a0a0a0"></div>
<div class="ab" style="left:554px;top:109px;width:68px;height:1px;background:#a0a0a0"></div>
<div class="ab" style="left:621px;top:109px;width:51px;height:1px;background:#a0a0a0"></div>
<div class="ab" style="left:671px;top:109px;width:51px;height:1px;background:#a0a0a0"></div>
<div class="ab" style="left:721px;top:109px;width:51px;height:1px;background:#a0a0a0"></div>
<div class="ab" style="left:771px;top:109px;width:51px;height:1px;background:#a0a0a0"></div>
<div class="ab" style="left:821px;top:109px;width:64px;height:1px;background:#a0a0a0"></div>
<div class="ab" style="left:884px;top:109px;width:60px;height:1px;background:#a0a0a0"></div>
<div class="ab" style="left:943px;top:109px;width:71px;height:1px;background:#a0a0a0"></div>
<div class="ab" style="left:1068px;top:109px;width:81px;height:1px;background:#a0a0a0"></div>
<div class="ab" style="left:1148px;top:109px;width:58px;height:1px;background:#a0a0a0"></div>
<div class="ab" style="left:1205px;top:109px;width:121px;height:1px;background:#a0a0a0"></div>
<div class="ab" style="left:1325px;top:109px;width:61px;height:1px;background:#a0a0a0"></div>
<div class="ab" style="left:-1px;top:131px;width:24px;height:1px;background:#a0a0a0"></div>
<div class="ab" style="left:354px;top:131px;width:56px;height:1px;background:#a0a0a0"></div>
<div class="ab" style="left:409px;top:131px;width:81px;height:1px;background:#a0a0a0"></div>
<div class="ab" style="left:489px;top:131px;width:66px;height:1px;background:#a0a0a0"></div>
<div class="ab" style="left:554px;top:131px;width:68px;height:1px;background:#a0a0a0"></div>
<div class="ab" style="left:621px;top:131px;width:51px;height:1px;background:#a0a0a0"></div>
<div class="ab" style="left:671px;top:131px;width:51px;height:1px;background:#a0a0a0"></div>
<div class="ab" style="left:721px;top:131px;width:51px;height:1px;background:#a0a0a0"></div>
<div class="ab" style="left:771px;top:131px;width:51px;height:1px;background:#a0a0a0"></div>
<div class="ab" style="left:821px;top:131px;width:64px;height:1px;background:#a0a0a0"></div>
<div class="ab" style="left:884px;top:131px;width:60px;height:1px;background:#a0a0a0"></div>
<div class="ab" style="left:943px;top:131px;width:71px;height:1px;background:#a0a0a0"></div>
<div class="ab" style="left:1068px;top:131px;width:81px;height:1px;background:#a0a0a0"></div>
<div class="ab" style="left:1148px;top:131px;width:58px;height:1px;background:#a0a0a0"></div>
<div class="ab" style="left:1205px;top:131px;width:121px;height:1px;background:#a0a0a0"></div>
<div class="ab" style="left:1325px;top:131px;width:61px;height:1px;background:#a0a0a0"></div>
<div class="ab" style="left:-1px;top:153px;width:24px;height:1px;background:#a0a0a0"></div>
<div class="ab" style="left:95px;top:153px;width:102px;height:1px;background:#a0a0a0"></div>
<div class="ab" style="left:196px;top:153px;width:82px;height:1px;background:#a0a0a0"></div>
<div class="ab" style="left:277px;top:153px;width:78px;height:1px;background:#a0a0a0"></div>
<div class="ab" style="left:354px;top:153px;width:56px;height:1px;background:#a0a0a0"></div>
<div class="ab" style="left:409px;top:153px;width:81px;height:1px;background:#a0a0a0"></div>
<div class="ab" style="left:489px;top:153px;width:66px;height:1px;background:#a0a0a0"></div>
<div class="ab" style="left:554px;top:153px;width:68px;height:1px;background:#a0a0a0"></div>
<div class="ab" style="left:621px;top:153px;width:51px;height:1px;background:#a0a0a0"></div>
<div class="ab" style="left:671px;top:153px;width:51px;height:1px;background:#a0a0a0"></div>
<div class="ab" style="left:721px;top:153px;width:51px;height:1px;background:#a0a0a0"></div>
<div class="ab" style="left:771px;top:153px;width:51px;height:1px;background:#a0a0a0"></div>
<div class="ab" style="left:821px;top:153px;width:64px;height:1px;background:#a0a0a0"></div>
<div class="ab" style="left:884px;top:153px;width:60px;height:1px;background:#a0a0a0"></div>
<div class="ab" style="left:943px;top:153px;width:71px;height:1px;background:#a0a0a0"></div>
<div class="ab" style="left:1013px;top:153px;width:56px;height:1px;background:#a0a0a0"></div>
<div class="ab" style="left:1068px;top:153px;width:81px;height:1px;background:#a0a0a0"></div>
<div class="ab" style="left:1148px;top:153px;width:58px;height:1px;background:#a0a0a0"></div>
<div class="ab" style="left:1205px;top:153px;width:121px;height:1px;background:#a0a0a0"></div>
<div class="ab" style="left:1325px;top:153px;width:61px;height:1px;background:#a0a0a0"></div>
<div class="ab" style="left:-1px;top:175px;width:24px;height:1px;background:#a0a0a0"></div>
<div class="ab" style="left:354px;top:175px;width:56px;height:1px;background:#a0a0a0"></div>
<div class="ab" style="left:409px;top:175px;width:81px;height:1px;background:#a0a0a0"></div>
<div class="ab" style="left:489px;top:175px;width:66px;height:1px;background:#a0a0a0"></div>
<div class="ab" style="left:554px;top:175px;width:68px;height:1px;background:#a0a0a0"></div>
<div class="ab" style="left:621px;top:175px;width:51px;height:1px;background:#a0a0a0"></div>
<div class="ab" style="left:671px;top:175px;width:51px;height:1px;background:#a0a0a0"></div>
<div class="ab" style="left:721px;top:175px;width:51px;height:1px;background:#a0a0a0"></div>
<div class="ab" style="left:771px;top:175px;width:51px;height:1px;background:#a0a0a0"></div>
<div class="ab" style="left:821px;top:175px;width:64px;height:1px;background:#a0a0a0"></div>
<div class="ab" style="left:884px;top:175px;width:60px;height:1px;background:#a0a0a0"></div>
<div class="ab" style="left:943px;top:175px;width:71px;height:1px;background:#a0a0a0"></div>
<div class="ab" style="left:1068px;top:175px;width:81px;height:1px;background:#a0a0a0"></div>
<div class="ab" style="left:1148px;top:175px;width:58px;height:1px;background:#a0a0a0"></div>
<div class="ab" style="left:1205px;top:175px;width:121px;height:1px;background:#a0a0a0"></div>
<div class="ab" style="left:1325px;top:175px;width:61px;height:1px;background:#a0a0a0"></div>
<div class="ab" style="left:-1px;top:197px;width:24px;height:1px;background:#a0a0a0"></div>
<div class="ab" style="left:354px;top:197px;width:56px;height:1px;background:#a0a0a0"></div>
<div class="ab" style="left:409px;top:197px;width:81px;height:1px;background:#a0a0a0"></div>
<div class="ab" style="left:489px;top:197px;width:66px;height:1px;background:#a0a0a0"></div>
<div class="ab" style="left:554px;top:197px;width:68px;height:1px;background:#a0a0a0"></div>
<div class="ab" style="left:621px;top:197px;width:51px;height:1px;background:#a0a0a0"></div>
<div class="ab" style="left:671px;top:197px;width:51px;height:1px;background:#a0a0a0"></div>
<div class="ab" style="left:721px;top:197px;width:51px;height:1px;background:#a0a0a0"></div>
<div class="ab" style="left:771px;top:197px;width:51px;height:1px;background:#a0a0a0"></div>
<div class="ab" style="left:821px;top:197px;width:64px;height:1px;background:#a0a0a0"></div>
<div class="ab" style="left:884px;top:197px;width:60px;height:1px;background:#a0a0a0"></div>
<div class="ab" style="left:943px;top:197px;width:71px;height:1px;background:#a0a0a0"></div>
<div class="ab" style="left:1068px;top:197px;width:81px;height:1px;background:#a0a0a0"></div>
<div class="ab" style="left:1148px;top:197px;width:58px;height:1px;background:#a0a0a0"></div>
<div class="ab" style="left:1205px;top:197px;width:121px;height:1px;background:#a0a0a0"></div>
<div class="ab" style="left:1325px;top:197px;width:61px;height:1px;background:#a0a0a0"></div>
<div class="ab" style="left:-1px;top:219px;width:24px;height:1px;background:#a0a0a0"></div>
<div class="ab" style="left:354px;top:219px;width:56px;height:1px;background:#a0a0a0"></div>
<div class="ab" style="left:409px;top:219px;width:81px;height:1px;background:#a0a0a0"></div>
<div class="ab" style="left:489px;top:219px;width:66px;height:1px;background:#a0a0a0"></div>
<div class="ab" style="left:554px;top:219px;width:68px;height:1px;background:#a0a0a0"></div>
<div class="ab" style="left:621px;top:219px;width:51px;height:1px;background:#a0a0a0"></div>
<div class="ab" style="left:671px;top:219px;width:51px;height:1px;background:#a0a0a0"></div>
<div class="ab" style="left:721px;top:219px;width:51px;height:1px;background:#a0a0a0"></div>
<div class="ab" style="left:771px;top:219px;width:51px;height:1px;background:#a0a0a0"></div>
<div class="ab" style="left:821px;top:219px;width:64px;height:1px;background:#a0a0a0"></div>
<div class="ab" style="left:884px;top:219px;width:60px;height:1px;background:#a0a0a0"></div>
<div class="ab" style="left:943px;top:219px;width:71px;height:1px;background:#a0a0a0"></div>
<div class="ab" style="left:1068px;top:219px;width:81px;height:1px;background:#a0a0a0"></div>
<div class="ab" style="left:1148px;top:219px;width:58px;height:1px;background:#a0a0a0"></div>
<div class="ab" style="left:1205px;top:219px;width:121px;height:1px;background:#a0a0a0"></div>
<div class="ab" style="left:1325px;top:219px;width:61px;height:1px;background:#a0a0a0"></div>
<div class="ab" style="left:-1px;top:241px;width:24px;height:1px;background:#a0a0a0"></div>
<div class="ab" style="left:95px;top:241px;width:102px;height:1px;background:#a0a0a0"></div>
<div class="ab" style="left:196px;top:241px;width:82px;height:1px;background:#a0a0a0"></div>
<div class="ab" style="left:277px;top:241px;width:78px;height:1px;background:#a0a0a0"></div>
<div class="ab" style="left:354px;top:241px;width:56px;height:1px;background:#a0a0a0"></div>
<div class="ab" style="left:409px;top:241px;width:81px;height:1px;background:#a0a0a0"></div>
<div class="ab" style="left:489px;top:241px;width:66px;height:1px;background:#a0a0a0"></div>
<div class="ab" style="left:554px;top:241px;width:68px;height:1px;background:#a0a0a0"></div>
<div class="ab" style="left:621px;top:241px;width:51px;height:1px;background:#a0a0a0"></div>
<div class="ab" style="left:671px;top:241px;width:51px;height:1px;background:#a0a0a0"></div>
<div class="ab" style="left:721px;top:241px;width:51px;height:1px;background:#a0a0a0"></div>
<div class="ab" style="left:771px;top:241px;width:51px;height:1px;background:#a0a0a0"></div>
<div class="ab" style="left:821px;top:241px;width:64px;height:1px;background:#a0a0a0"></div>
<div class="ab" style="left:884px;top:241px;width:60px;height:1px;background:#a0a0a0"></div>
<div class="ab" style="left:943px;top:241px;width:71px;height:1px;background:#a0a0a0"></div>
<div class="ab" style="left:1013px;top:241px;width:56px;height:1px;background:#a0a0a0"></div>
<div class="ab" style="left:1068px;top:241px;width:81px;height:1px;background:#a0a0a0"></div>
<div class="ab" style="left:1148px;top:241px;width:58px;height:1px;background:#a0a0a0"></div>
<div class="ab" style="left:1205px;top:241px;width:121px;height:1px;background:#a0a0a0"></div>
<div class="ab" style="left:1325px;top:241px;width:61px;height:1px;background:#a0a0a0"></div>
<div class="ab" style="left:-1px;top:263px;width:24px;height:1px;background:#a0a0a0"></div>
<div class="ab" style="left:354px;top:263px;width:56px;height:1px;background:#a0a0a0"></div>
<div class="ab" style="left:409px;top:263px;width:81px;height:1px;background:#a0a0a0"></div>
<div class="ab" style="left:489px;top:263px;width:66px;height:1px;background:#a0a0a0"></div>
<div class="ab" style="left:554px;top:263px;width:68px;height:1px;background:#a0a0a0"></div>
<div class="ab" style="left:621px;top:263px;width:51px;height:1px;background:#a0a0a0"></div>
<div class="ab" style="left:671px;top:263px;width:51px;height:1px;background:#a0a0a0"></div>
<div class="ab" style="left:721px;top:263px;width:51px;height:1px;background:#a0a0a0"></div>
<div class="ab" style="left:771px;top:263px;width:51px;height:1px;background:#a0a0a0"></div>
<div class="ab" style="left:821px;top:263px;width:64px;height:1px;background:#a0a0a0"></div>
<div class="ab" style="left:884px;top:263px;width:60px;height:1px;background:#a0a0a0"></div>
<div class="ab" style="left:943px;top:263px;width:71px;height:1px;background:#a0a0a0"></div>
<div class="ab" style="left:1068px;top:263px;width:81px;height:1px;background:#a0a0a0"></div>
<div class="ab" style="left:1148px;top:263px;width:58px;height:1px;background:#a0a0a0"></div>
<div class="ab" style="left:1205px;top:263px;width:121px;height:1px;background:#a0a0a0"></div>
<div class="ab" style="left:1325px;top:263px;width:61px;height:1px;background:#a0a0a0"></div>
<div class="ab" style="left:-1px;top:285px;width:24px;height:1px;background:#a0a0a0"></div>
<div class="ab" style="left:354px;top:285px;width:56px;height:1px;background:#a0a0a0"></div>
<div class="ab" style="left:409px;top:285px;width:81px;height:1px;background:#a0a0a0"></div>
<div class="ab" style="left:489px;top:285px;width:66px;height:1px;background:#a0a0a0"></div>
<div class="ab" style="left:554px;top:285px;width:68px;height:1px;background:#a0a0a0"></div>
<div class="ab" style="left:621px;top:285px;width:51px;height:1px;background:#a0a0a0"></div>
<div class="ab" style="left:671px;top:285px;width:51px;height:1px;background:#a0a0a0"></div>
<div class="ab" style="left:721px;top:285px;width:51px;height:1px;background:#a0a0a0"></div>
<div class="ab" style="left:771px;top:285px;width:51px;height:1px;background:#a0a0a0"></div>
<div class="ab" style="left:821px;top:285px;width:64px;height:1px;background:#a0a0a0"></div>
<div class="ab" style="left:884px;top:285px;width:60px;height:1px;background:#a0a0a0"></div>
<div class="ab" style="left:943px;top:285px;width:71px;height:1px;background:#a0a0a0"></div>
<div class="ab" style="left:1068px;top:285px;width:81px;height:1px;background:#a0a0a0"></div>
<div class="ab" style="left:1148px;top:285px;width:58px;height:1px;background:#a0a0a0"></div>
<div class="ab" style="left:1205px;top:285px;width:121px;height:1px;background:#a0a0a0"></div>
<div class="ab" style="left:1325px;top:285px;width:61px;height:1px;background:#a0a0a0"></div>
<div class="ab" style="left:-1px;top:307px;width:24px;height:1px;background:#a0a0a0"></div>
<div class="ab" style="left:354px;top:307px;width:56px;height:1px;background:#a0a0a0"></div>
<div class="ab" style="left:409px;top:307px;width:81px;height:1px;background:#a0a0a0"></div>
<div class="ab" style="left:489px;top:307px;width:66px;height:1px;background:#a0a0a0"></div>
<div class="ab" style="left:554px;top:307px;width:68px;height:1px;background:#a0a0a0"></div>
<div class="ab" style="left:621px;top:307px;width:51px;height:1px;background:#a0a0a0"></div>
<div class="ab" style="left:671px;top:307px;width:51px;height:1px;background:#a0a0a0"></div>
<div class="ab" style="left:721px;top:307px;width:51px;height:1px;background:#a0a0a0"></div>
<div class="ab" style="left:771px;top:307px;width:51px;height:1px;background:#a0a0a0"></div>
<div class="ab" style="left:821px;top:307px;width:64px;height:1px;background:#a0a0a0"></div>
<div class="ab" style="left:884px;top:307px;width:60px;height:1px;background:#a0a0a0"></div>
<div class="ab" style="left:943px;top:307px;width:71px;height:1px;background:#a0a0a0"></div>
<div class="ab" style="left:1068px;top:307px;width:81px;height:1px;background:#a0a0a0"></div>
<div class="ab" style="left:1148px;top:307px;width:58px;height:1px;background:#a0a0a0"></div>
<div class="ab" style="left:1205px;top:307px;width:121px;height:1px;background:#a0a0a0"></div>
<div class="ab" style="left:1325px;top:307px;width:61px;height:1px;background:#a0a0a0"></div>
<div class="ab" style="left:-1px;top:329px;width:24px;height:1px;background:#a0a0a0"></div>
<div class="ab" style="left:354px;top:329px;width:56px;height:1px;background:#a0a0a0"></div>
<div class="ab" style="left:409px;top:329px;width:81px;height:1px;background:#a0a0a0"></div>
<div class="ab" style="left:489px;top:329px;width:66px;height:1px;background:#a0a0a0"></div>
<div class="ab" style="left:554px;top:329px;width:68px;height:1px;background:#a0a0a0"></div>
<div class="ab" style="left:621px;top:329px;width:51px;height:1px;background:#a0a0a0"></div>
<div class="ab" style="left:671px;top:329px;width:51px;height:1px;background:#a0a0a0"></div>
<div class="ab" style="left:721px;top:329px;width:51px;height:1px;background:#a0a0a0"></div>
<div class="ab" style="left:771px;top:329px;width:51px;height:1px;background:#a0a0a0"></div>
<div class="ab" style="left:821px;top:329px;width:64px;height:1px;background:#a0a0a0"></div>
<div class="ab" style="left:884px;top:329px;width:60px;height:1px;background:#a0a0a0"></div>
<div class="ab" style="left:943px;top:329px;width:71px;height:1px;background:#a0a0a0"></div>
<div class="ab" style="left:1068px;top:329px;width:81px;height:1px;background:#a0a0a0"></div>
<div class="ab" style="left:1148px;top:329px;width:58px;height:1px;background:#a0a0a0"></div>
<div class="ab" style="left:1205px;top:329px;width:121px;height:1px;background:#a0a0a0"></div>
<div class="ab" style="left:1325px;top:329px;width:61px;height:1px;background:#a0a0a0"></div>
<div class="ab" style="left:-1px;top:351px;width:24px;height:1px;background:#a0a0a0"></div>
<div class="ab" style="left:354px;top:351px;width:56px;height:1px;background:#a0a0a0"></div>
<div class="ab" style="left:409px;top:351px;width:81px;height:1px;background:#a0a0a0"></div>
<div class="ab" style="left:489px;top:351px;width:66px;height:1px;background:#a0a0a0"></div>
<div class="ab" style="left:554px;top:351px;width:68px;height:1px;background:#a0a0a0"></div>
<div class="ab" style="left:621px;top:351px;width:51px;height:1px;background:#a0a0a0"></div>
<div class="ab" style="left:671px;top:351px;width:51px;height:1px;background:#a0a0a0"></div>
<div class="ab" style="left:721px;top:351px;width:51px;height:1px;background:#a0a0a0"></div>
<div class="ab" style="left:771px;top:351px;width:51px;height:1px;background:#a0a0a0"></div>
<div class="ab" style="left:821px;top:351px;width:64px;height:1px;background:#a0a0a0"></div>
<div class="ab" style="left:884px;top:351px;width:60px;height:1px;background:#a0a0a0"></div>
<div class="ab" style="left:943px;top:351px;width:71px;height:1px;background:#a0a0a0"></div>
<div class="ab" style="left:1068px;top:351px;width:81px;height:1px;background:#a0a0a0"></div>
<div class="ab" style="left:1148px;top:351px;width:58px;height:1px;background:#a0a0a0"></div>
<div class="ab" style="left:1205px;top:351px;width:121px;height:1px;background:#a0a0a0"></div>
<div class="ab" style="left:1325px;top:351px;width:61px;height:1px;background:#a0a0a0"></div>
<div class="ab" style="left:-1px;top:373px;width:24px;height:1px;background:#a0a0a0"></div>
<div class="ab" style="left:354px;top:373px;width:56px;height:1px;background:#a0a0a0"></div>
<div class="ab" style="left:409px;top:373px;width:81px;height:1px;background:#a0a0a0"></div>
<div class="ab" style="left:489px;top:373px;width:66px;height:1px;background:#a0a0a0"></div>
<div class="ab" style="left:554px;top:373px;width:68px;height:1px;background:#a0a0a0"></div>
<div class="ab" style="left:621px;top:373px;width:51px;height:1px;background:#a0a0a0"></div>
<div class="ab" style="left:671px;top:373px;width:51px;height:1px;background:#a0a0a0"></div>
<div class="ab" style="left:721px;top:373px;width:51px;height:1px;background:#a0a0a0"></div>
<div class="ab" style="left:771px;top:373px;width:51px;height:1px;background:#a0a0a0"></div>
<div class="ab" style="left:821px;top:373px;width:64px;height:1px;background:#a0a0a0"></div>
<div class="ab" style="left:884px;top:373px;width:60px;height:1px;background:#a0a0a0"></div>
<div class="ab" style="left:943px;top:373px;width:71px;height:1px;background:#a0a0a0"></div>
<div class="ab" style="left:1068px;top:373px;width:81px;height:1px;background:#a0a0a0"></div>
<div class="ab" style="left:1148px;top:373px;width:58px;height:1px;background:#a0a0a0"></div>
<div class="ab" style="left:1205px;top:373px;width:121px;height:1px;background:#a0a0a0"></div>
<div class="ab" style="left:1325px;top:373px;width:61px;height:1px;background:#a0a0a0"></div>
<div class="ab" style="left:-1px;top:395px;width:24px;height:1px;background:#a0a0a0"></div>
<div class="ab" style="left:23px;top:395px;width:73px;height:1px;background:#a0a0a0"></div>
<div class="ab" style="left:95px;top:395px;width:102px;height:1px;background:#a0a0a0"></div>
<div class="ab" style="left:196px;top:395px;width:82px;height:1px;background:#a0a0a0"></div>
<div class="ab" style="left:277px;top:395px;width:78px;height:1px;background:#a0a0a0"></div>
<div class="ab" style="left:354px;top:395px;width:56px;height:1px;background:#a0a0a0"></div>
<div class="ab" style="left:409px;top:395px;width:81px;height:1px;background:#a0a0a0"></div>
<div class="ab" style="left:489px;top:395px;width:66px;height:1px;background:#a0a0a0"></div>
<div class="ab" style="left:554px;top:395px;width:68px;height:1px;background:#a0a0a0"></div>
<div class="ab" style="left:621px;top:395px;width:51px;height:1px;background:#a0a0a0"></div>
<div class="ab" style="left:671px;top:395px;width:51px;height:1px;background:#a0a0a0"></div>
<div class="ab" style="left:721px;top:395px;width:51px;height:1px;background:#a0a0a0"></div>
<div class="ab" style="left:771px;top:395px;width:51px;height:1px;background:#a0a0a0"></div>
<div class="ab" style="left:821px;top:395px;width:64px;height:1px;background:#a0a0a0"></div>
<div class="ab" style="left:884px;top:395px;width:60px;height:1px;background:#a0a0a0"></div>
<div class="ab" style="left:943px;top:395px;width:71px;height:1px;background:#a0a0a0"></div>
<div class="ab" style="left:1013px;top:395px;width:56px;height:1px;background:#a0a0a0"></div>
<div class="ab" style="left:1068px;top:395px;width:81px;height:1px;background:#a0a0a0"></div>
<div class="ab" style="left:1148px;top:395px;width:58px;height:1px;background:#a0a0a0"></div>
<div class="ab" style="left:1205px;top:395px;width:121px;height:1px;background:#a0a0a0"></div>
<div class="ab" style="left:1325px;top:395px;width:61px;height:1px;background:#a0a0a0"></div>
<div class="ab" style="left:-1px;top:417px;width:24px;height:1px;background:#a0a0a0"></div>
<div class="ab" style="left:23px;top:417px;width:73px;height:1px;background:#a0a0a0"></div>
<div class="ab" style="left:95px;top:417px;width:102px;height:1px;background:#a0a0a0"></div>
<div class="ab" style="left:196px;top:417px;width:82px;height:1px;background:#a0a0a0"></div>
<div class="ab" style="left:277px;top:417px;width:78px;height:1px;background:#a0a0a0"></div>
<div class="ab" style="left:354px;top:417px;width:56px;height:1px;background:#a0a0a0"></div>
<div class="ab" style="left:409px;top:417px;width:81px;height:1px;background:#a0a0a0"></div>
<div class="ab" style="left:489px;top:417px;width:66px;height:1px;background:#a0a0a0"></div>
<div class="ab" style="left:554px;top:417px;width:68px;height:1px;background:#a0a0a0"></div>
<div class="ab" style="left:621px;top:417px;width:51px;height:1px;background:#a0a0a0"></div>
<div class="ab" style="left:671px;top:417px;width:51px;height:1px;background:#a0a0a0"></div>
<div class="ab" style="left:721px;top:417px;width:51px;height:1px;background:#a0a0a0"></div>
<div class="ab" style="left:771px;top:417px;width:51px;height:1px;background:#a0a0a0"></div>
<div class="ab" style="left:821px;top:417px;width:64px;height:1px;background:#a0a0a0"></div>
<div class="ab" style="left:884px;top:417px;width:60px;height:1px;background:#a0a0a0"></div>
<div class="ab" style="left:943px;top:417px;width:71px;height:1px;background:#a0a0a0"></div>
<div class="ab" style="left:1013px;top:417px;width:56px;height:1px;background:#a0a0a0"></div>
<div class="ab" style="left:1068px;top:417px;width:81px;height:1px;background:#a0a0a0"></div>
<div class="ab" style="left:1148px;top:417px;width:58px;height:1px;background:#a0a0a0"></div>
<div class="ab" style="left:1205px;top:417px;width:121px;height:1px;background:#a0a0a0"></div>
<div class="ab" style="left:1325px;top:417px;width:61px;height:1px;background:#a0a0a0"></div>
<div class="ab" style="left:-1px;top:439px;width:24px;height:1px;background:#a0a0a0"></div>
<div class="ab" style="left:354px;top:439px;width:56px;height:1px;background:#a0a0a0"></div>
<div class="ab" style="left:409px;top:439px;width:81px;height:1px;background:#a0a0a0"></div>
<div class="ab" style="left:489px;top:439px;width:66px;height:1px;background:#a0a0a0"></div>
<div class="ab" style="left:554px;top:439px;width:68px;height:1px;background:#a0a0a0"></div>
<div class="ab" style="left:621px;top:439px;width:51px;height:1px;background:#a0a0a0"></div>
<div class="ab" style="left:671px;top:439px;width:51px;height:1px;background:#a0a0a0"></div>
<div class="ab" style="left:721px;top:439px;width:51px;height:1px;background:#a0a0a0"></div>
<div class="ab" style="left:771px;top:439px;width:51px;height:1px;background:#a0a0a0"></div>
<div class="ab" style="left:821px;top:439px;width:64px;height:1px;background:#a0a0a0"></div>
<div class="ab" style="left:884px;top:439px;width:60px;height:1px;background:#a0a0a0"></div>
<div class="ab" style="left:943px;top:439px;width:71px;height:1px;background:#a0a0a0"></div>
<div class="ab" style="left:1068px;top:439px;width:81px;height:1px;background:#a0a0a0"></div>
<div class="ab" style="left:1148px;top:439px;width:58px;height:1px;background:#a0a0a0"></div>
<div class="ab" style="left:1205px;top:439px;width:121px;height:1px;background:#a0a0a0"></div>
<div class="ab" style="left:1325px;top:439px;width:61px;height:1px;background:#a0a0a0"></div>
<div class="ab" style="left:-1px;top:461px;width:24px;height:1px;background:#a0a0a0"></div>
<div class="ab" style="left:354px;top:461px;width:56px;height:1px;background:#a0a0a0"></div>
<div class="ab" style="left:409px;top:461px;width:81px;height:1px;background:#a0a0a0"></div>
<div class="ab" style="left:489px;top:461px;width:66px;height:1px;background:#a0a0a0"></div>
<div class="ab" style="left:554px;top:461px;width:68px;height:1px;background:#a0a0a0"></div>
<div class="ab" style="left:621px;top:461px;width:51px;height:1px;background:#a0a0a0"></div>
<div class="ab" style="left:671px;top:461px;width:51px;height:1px;background:#a0a0a0"></div>
<div class="ab" style="left:721px;top:461px;width:51px;height:1px;background:#a0a0a0"></div>
<div class="ab" style="left:771px;top:461px;width:51px;height:1px;background:#a0a0a0"></div>
<div class="ab" style="left:821px;top:461px;width:64px;height:1px;background:#a0a0a0"></div>
<div class="ab" style="left:884px;top:461px;width:60px;height:1px;background:#a0a0a0"></div>
<div class="ab" style="left:943px;top:461px;width:71px;height:1px;background:#a0a0a0"></div>
<div class="ab" style="left:1068px;top:461px;width:81px;height:1px;background:#a0a0a0"></div>
<div class="ab" style="left:1148px;top:461px;width:58px;height:1px;background:#a0a0a0"></div>
<div class="ab" style="left:1205px;top:461px;width:121px;height:1px;background:#a0a0a0"></div>
<div class="ab" style="left:1325px;top:461px;width:61px;height:1px;background:#a0a0a0"></div>
<div class="ab" style="left:-1px;top:483px;width:24px;height:1px;background:#a0a0a0"></div>
<div class="ab" style="left:354px;top:483px;width:56px;height:1px;background:#a0a0a0"></div>
<div class="ab" style="left:409px;top:483px;width:81px;height:1px;background:#a0a0a0"></div>
<div class="ab" style="left:489px;top:483px;width:66px;height:1px;background:#a0a0a0"></div>
<div class="ab" style="left:554px;top:483px;width:68px;height:1px;background:#a0a0a0"></div>
<div class="ab" style="left:621px;top:483px;width:51px;height:1px;background:#a0a0a0"></div>
<div class="ab" style="left:671px;top:483px;width:51px;height:1px;background:#a0a0a0"></div>
<div class="ab" style="left:721px;top:483px;width:51px;height:1px;background:#a0a0a0"></div>
<div class="ab" style="left:771px;top:483px;width:51px;height:1px;background:#a0a0a0"></div>
<div class="ab" style="left:821px;top:483px;width:64px;height:1px;background:#a0a0a0"></div>
<div class="ab" style="left:884px;top:483px;width:60px;height:1px;background:#a0a0a0"></div>
<div class="ab" style="left:943px;top:483px;width:71px;height:1px;background:#a0a0a0"></div>
<div class="ab" style="left:1068px;top:483px;width:81px;height:1px;background:#a0a0a0"></div>
<div class="ab" style="left:1148px;top:483px;width:58px;height:1px;background:#a0a0a0"></div>
<div class="ab" style="left:1205px;top:483px;width:121px;height:1px;background:#a0a0a0"></div>
<div class="ab" style="left:1325px;top:483px;width:61px;height:1px;background:#a0a0a0"></div>
<div class="ab" style="left:-1px;top:505px;width:24px;height:1px;background:#a0a0a0"></div>
<div class="ab" style="left:23px;top:505px;width:73px;height:1px;background:#a0a0a0"></div>
<div class="ab" style="left:95px;top:505px;width:102px;height:1px;background:#a0a0a0"></div>
<div class="ab" style="left:196px;top:505px;width:82px;height:1px;background:#a0a0a0"></div>
<div class="ab" style="left:277px;top:505px;width:78px;height:1px;background:#a0a0a0"></div>
<div class="ab" style="left:354px;top:505px;width:56px;height:1px;background:#a0a0a0"></div>
<div class="ab" style="left:409px;top:505px;width:81px;height:1px;background:#a0a0a0"></div>
<div class="ab" style="left:489px;top:505px;width:66px;height:1px;background:#a0a0a0"></div>
<div class="ab" style="left:554px;top:505px;width:68px;height:1px;background:#a0a0a0"></div>
<div class="ab" style="left:621px;top:505px;width:51px;height:1px;background:#a0a0a0"></div>
<div class="ab" style="left:671px;top:505px;width:51px;height:1px;background:#a0a0a0"></div>
<div class="ab" style="left:721px;top:505px;width:51px;height:1px;background:#a0a0a0"></div>
<div class="ab" style="left:771px;top:505px;width:51px;height:1px;background:#a0a0a0"></div>
<div class="ab" style="left:821px;top:505px;width:64px;height:1px;background:#a0a0a0"></div>
<div class="ab" style="left:884px;top:505px;width:60px;height:1px;background:#a0a0a0"></div>
<div class="ab" style="left:943px;top:505px;width:71px;height:1px;background:#a0a0a0"></div>
<div class="ab" style="left:1013px;top:505px;width:56px;height:1px;background:#a0a0a0"></div>
<div class="ab" style="left:1068px;top:505px;width:81px;height:1px;background:#a0a0a0"></div>
<div class="ab" style="left:1148px;top:505px;width:58px;height:1px;background:#a0a0a0"></div>
<div class="ab" style="left:1205px;top:505px;width:121px;height:1px;background:#a0a0a0"></div>
<div class="ab" style="left:1325px;top:505px;width:61px;height:1px;background:#a0a0a0"></div>
<div class="ab" style="left:23px;top:0px;width:1px;height:503px;background:#a0a0a0"></div>
<div class="ab" style="left:95px;top:0px;width:1px;height:503px;background:#a0a0a0"></div>
<div class="ab" style="left:196px;top:0px;width:1px;height:503px;background:#a0a0a0"></div>
<div class="ab" style="left:277px;top:0px;width:1px;height:503px;background:#a0a0a0"></div>
<div class="ab" style="left:354px;top:0px;width:1px;height:503px;background:#a0a0a0"></div>
<div class="ab" style="left:409px;top:0px;width:1px;height:503px;background:#a0a0a0"></div>
<div class="ab" style="left:489px;top:0px;width:1px;height:503px;background:#a0a0a0"></div>
<div class="ab" style="left:554px;top:0px;width:1px;height:503px;background:#a0a0a0"></div>
<div class="ab" style="left:621px;top:0px;width:1px;height:503px;background:#a0a0a0"></div>
<div class="ab" style="left:671px;top:0px;width:1px;height:503px;background:#a0a0a0"></div>
<div class="ab" style="left:721px;top:0px;width:1px;height:503px;background:#a0a0a0"></div>
<div class="ab" style="left:771px;top:0px;width:1px;height:503px;background:#a0a0a0"></div>
<div class="ab" style="left:821px;top:0px;width:1px;height:503px;background:#a0a0a0"></div>
<div class="ab" style="left:884px;top:0px;width:1px;height:503px;background:#a0a0a0"></div>
<div class="ab" style="left:943px;top:0px;width:1px;height:503px;background:#a0a0a0"></div>
<div class="ab" style="left:1013px;top:0px;width:1px;height:503px;background:#a0a0a0"></div>
<div class="ab" style="left:1068px;top:0px;width:1px;height:503px;background:#a0a0a0"></div>
<div class="ab" style="left:1148px;top:0px;width:1px;height:503px;background:#a0a0a0"></div>
<div class="ab" style="left:1205px;top:0px;width:1px;height:503px;background:#a0a0a0"></div>
<div class="ab" style="left:1325px;top:0px;width:1px;height:503px;background:#a0a0a0"></div>
<div class="ab m" style="left:0px;top:1px;width:23px;height:21px;line-height:21px;text-align:center;font-size:11px">1</div>
<div class="ab m" style="left:0px;top:23px;width:23px;height:21px;line-height:21px;text-align:center;font-size:11px">2</div>
<div class="ab m" style="left:0px;top:45px;width:23px;height:21px;line-height:21px;text-align:center;font-size:11px">3</div>
<div class="ab m" style="left:0px;top:67px;width:23px;height:21px;line-height:21px;text-align:center;font-size:11px">4</div>
<div class="ab m" style="left:0px;top:89px;width:23px;height:21px;line-height:21px;text-align:center;font-size:11px">5</div>
<div class="ab m" style="left:0px;top:111px;width:23px;height:21px;line-height:21px;text-align:center;font-size:11px">6</div>
<div class="ab m" style="left:0px;top:133px;width:23px;height:21px;line-height:21px;text-align:center;font-size:11px">7</div>
<div class="ab m" style="left:0px;top:155px;width:23px;height:21px;line-height:21px;text-align:center;font-size:11px">8</div>
<div class="ab m" style="left:0px;top:177px;width:23px;height:21px;line-height:21px;text-align:center;font-size:11px">9</div>
<div class="ab m" style="left:0px;top:199px;width:23px;height:21px;line-height:21px;text-align:center;font-size:11px">10</div>
<div class="ab m" style="left:0px;top:221px;width:23px;height:21px;line-height:21px;text-align:center;font-size:11px">11</div>
<div class="ab m" style="left:0px;top:243px;width:23px;height:21px;line-height:21px;text-align:center;font-size:11px">12</div>
<div class="ab m" style="left:0px;top:265px;width:23px;height:21px;line-height:21px;text-align:center;font-size:11px">13</div>
<div class="ab m" style="left:0px;top:287px;width:23px;height:21px;line-height:21px;text-align:center;font-size:11px">14</div>
<div class="ab m" style="left:0px;top:309px;width:23px;height:21px;line-height:21px;text-align:center;font-size:11px">15</div>
<div class="ab m" style="left:0px;top:331px;width:23px;height:21px;line-height:21px;text-align:center;font-size:11px">16</div>
<div class="ab m" style="left:0px;top:353px;width:23px;height:21px;line-height:21px;text-align:center;font-size:11px">17</div>
<div class="ab m" style="left:0px;top:375px;width:23px;height:21px;line-height:21px;text-align:center;font-size:11px">18</div>
<div class="ab m" style="left:0px;top:397px;width:23px;height:21px;line-height:21px;text-align:center;font-size:11px">19</div>
<div class="ab m" style="left:0px;top:419px;width:23px;height:21px;line-height:21px;text-align:center;font-size:11px">20</div>
<div class="ab m" style="left:0px;top:441px;width:23px;height:21px;line-height:21px;text-align:center;font-size:11px">21</div>
<div class="ab m" style="left:0px;top:463px;width:23px;height:21px;line-height:21px;text-align:center;font-size:11px">22</div>
<div class="ab m" style="left:0px;top:485px;width:23px;height:21px;line-height:21px;text-align:center;font-size:11px">23</div>
<div class="t" style="left:25px;top:25.0px;font-family:Liberation Mono,monospace;font-size:11px;letter-spacing:-0.6px;-webkit-text-stroke-width:0;color:#000">2017/9/18</div>
<div class="t" style="left:25px;top:223.0px;font-family:Liberation Mono,monospace;font-size:11px;letter-spacing:-0.6px;-webkit-text-stroke-width:0;color:#000">2014/8/7</div>
<div class="t" style="left:25px;top:399.0px;font-family:Liberation Mono,monospace;font-size:11px;letter-spacing:-0.6px;-webkit-text-stroke-width:0;color:#808080">2013/12/18</div>
<div class="t" style="left:25px;top:454.0px;font-family:Liberation Mono,monospace;font-size:11px;letter-spacing:-0.6px;-webkit-text-stroke-width:0;color:#808080">2013/10/15</div>
<div class="ab m" style="left:96px;top:25.0px;width:100px;text-align:center;line-height:14px;color:#0000ff;text-decoration:underline;white-space:nowrap">NO.201709180001</div>
<div class="t" style="left:198px;top:25.0px;color:#000">客户<span class="m">A</span></div>
<div class="ab" style="left:278px;top:25.0px;width:76px;text-align:center;line-height:14px;color:#008000;text-decoration:underline;white-space:nowrap"><span class="m">[3</span>个附件<span class="m">]</span></div>
<div class="ab" style="left:1034px;top:26.0px;width:12px;height:12px;background:#fff;border-left:1px solid #a0a0a0;border-top:1px solid #a0a0a0;border-right:1px solid #e6e6e6;border-bottom:1px solid #e6e6e6"></div>
<div class="ab m" style="left:96px;top:102.0px;width:100px;text-align:center;line-height:14px;color:#0000ff;text-decoration:underline;white-space:nowrap">NO.201408070003</div>
<div class="t" style="left:198px;top:102.0px;color:#000">客户<span class="m">B</span></div>
<div class="ab" style="left:278px;top:102.0px;width:76px;text-align:center;line-height:14px;color:#008000;text-decoration:underline;white-space:nowrap"><span class="m">[0</span>个附件<span class="m">]</span></div>
<div class="ab" style="left:1034px;top:103.0px;width:12px;height:12px;background:#fff;border-left:1px solid #a0a0a0;border-top:1px solid #a0a0a0;border-right:1px solid #e6e6e6;border-bottom:1px solid #e6e6e6"></div>
<div class="ab m" style="left:96px;top:190.0px;width:100px;text-align:center;line-height:14px;color:#0000ff;text-decoration:underline;white-space:nowrap">NO.201408070002</div>
<div class="t" style="left:198px;top:190.0px;color:#000">客户<span class="m">B</span></div>
<div class="ab" style="left:278px;top:190.0px;width:76px;text-align:center;line-height:14px;color:#008000;text-decoration:underline;white-space:nowrap"><span class="m">[0</span>个附件<span class="m">]</span></div>
<div class="ab" style="left:1034px;top:191.0px;width:12px;height:12px;background:#fff;border-left:1px solid #a0a0a0;border-top:1px solid #a0a0a0;border-right:1px solid #e6e6e6;border-bottom:1px solid #e6e6e6"></div>
<div class="ab m" style="left:96px;top:311.0px;width:100px;text-align:center;line-height:14px;color:#0000ff;text-decoration:underline;white-space:nowrap">NO.201408070001</div>
<div class="t" style="left:198px;top:311.0px;color:#000">客户<span class="m">A</span></div>
<div class="ab" style="left:278px;top:311.0px;width:76px;text-align:center;line-height:14px;color:#008000;text-decoration:underline;white-space:nowrap"><span class="m">[0</span>个附件<span class="m">]</span></div>
<div class="ab" style="left:1034px;top:312.0px;width:12px;height:12px;background:#fff;border-left:1px solid #a0a0a0;border-top:1px solid #a0a0a0;border-right:1px solid #e6e6e6;border-bottom:1px solid #e6e6e6"></div>
<div class="ab m" style="left:96px;top:399.0px;width:100px;text-align:center;line-height:14px;color:#0000ff;text-decoration:underline;white-space:nowrap">JGZZD-2013-12-18</div>
<div class="t" style="left:198px;top:399.0px;color:#808080">客户<span class="m">B</span></div>
<div class="ab" style="left:278px;top:399.0px;width:76px;text-align:center;line-height:14px;color:#008000;text-decoration:underline;white-space:nowrap"><span class="m">[0</span>个附件<span class="m">]</span></div>
<div class="ab" style="left:1034px;top:400.0px;width:12px;height:12px;background:#fff;border-left:1px solid #a0a0a0;border-top:1px solid #a0a0a0;border-right:1px solid #e6e6e6;border-bottom:1px solid #e6e6e6"></div>
<div class="ab m" style="left:96px;top:448.0px;width:100px;text-align:center;line-height:13px;color:#0000ff;text-decoration:underline">JGZZD-2013-10-15<br>-001</div>
<div class="t" style="left:198px;top:454.0px;color:#808080">客户<span class="m">A</span></div>
<div class="ab" style="left:278px;top:454.0px;width:76px;text-align:center;line-height:14px;color:#008000;text-decoration:underline;white-space:nowrap"><span class="m">[0</span>个附件<span class="m">]</span></div>
<div class="ab" style="left:1034px;top:455.0px;width:12px;height:12px;background:#fff;border-left:1px solid #a0a0a0;border-top:1px solid #a0a0a0;border-right:1px solid #e6e6e6;border-bottom:1px solid #e6e6e6"></div>
<div class="t" style="left:377px;top:3px;color:#000">正常</div>
<div class="t" style="left:412px;top:2px;font-family:Liberation Mono,monospace;font-size:11px;letter-spacing:-0.6px;-webkit-text-stroke-width:0;color:#000">2017/8/23</div>
<div class="t" style="left:557px;top:4px;font-family:Liberation Mono,monospace;font-size:11px;letter-spacing:-0.6px;-webkit-text-stroke-width:0;color:#000">3</div>
<div class="ab" style="left:640px;top:4px;width:12px;height:12px;background:#fff;border-left:1px solid #a0a0a0;border-top:1px solid #a0a0a0;border-right:1px solid #e6e6e6;border-bottom:1px solid #e6e6e6"></div>
<div class="ab" style="left:690px;top:4px;width:12px;height:12px;background:#fff;border-left:1px solid #a0a0a0;border-top:1px solid #a0a0a0;border-right:1px solid #e6e6e6;border-bottom:1px solid #e6e6e6"></div>
<div class="ab" style="left:740px;top:4px;width:12px;height:12px;background:#fff;border-left:1px solid #a0a0a0;border-top:1px solid #a0a0a0;border-right:1px solid #e6e6e6;border-bottom:1px solid #e6e6e6"></div>
<div class="ab" style="left:790px;top:4px;width:12px;height:12px;background:#fff;border-left:1px solid #a0a0a0;border-top:1px solid #a0a0a0;border-right:1px solid #e6e6e6;border-bottom:1px solid #e6e6e6"></div>
<div class="ab" style="left:846px;top:4px;width:12px;height:12px;background:#fff;border-left:1px solid #a0a0a0;border-top:1px solid #a0a0a0;border-right:1px solid #e6e6e6;border-bottom:1px solid #e6e6e6"></div>
<svg class="ab" style="left:846px;top:4px" width="12" height="12" viewBox="0 0 12 12"><path d="M2.8 5.8 L4.9 8.3 L9.2 3.2" fill="none" stroke="#000" stroke-width="2"/></svg>
<div class="ab" style="left:907px;top:4px;width:12px;height:12px;background:#fff;border-left:1px solid #a0a0a0;border-top:1px solid #a0a0a0;border-right:1px solid #e6e6e6;border-bottom:1px solid #e6e6e6"></div>
<div class="t" style="left:1071px;top:3px;">中盛广告公司</div>
<div class="ab" style="left:972px;top:4px;width:12px;height:12px;background:#fff;border-left:1px solid #a0a0a0;border-top:1px solid #a0a0a0;border-right:1px solid #e6e6e6;border-bottom:1px solid #e6e6e6"></div>
<div class="t" style="left:1150px;top:3px;color:#000">超级用户</div>
<div class="t" style="left:1207px;top:3px;color:#000">未指定</div>
<div class="t" style="left:377px;top:25px;color:#000">正常</div>
<div class="t" style="left:412px;top:24px;font-family:Liberation Mono,monospace;font-size:11px;letter-spacing:-0.6px;-webkit-text-stroke-width:0;color:#000">2017/8/23</div>
<div class="t" style="left:557px;top:26px;font-family:Liberation Mono,monospace;font-size:11px;letter-spacing:-0.6px;-webkit-text-stroke-width:0;color:#000">400</div>
<div class="ab" style="left:640px;top:26px;width:12px;height:12px;background:#fff;border-left:1px solid #a0a0a0;border-top:1px solid #a0a0a0;border-right:1px solid #e6e6e6;border-bottom:1px solid #e6e6e6"></div>
<div class="ab" style="left:690px;top:26px;width:12px;height:12px;background:#fff;border-left:1px solid #a0a0a0;border-top:1px solid #a0a0a0;border-right:1px solid #e6e6e6;border-bottom:1px solid #e6e6e6"></div>
<div class="ab" style="left:740px;top:26px;width:12px;height:12px;background:#fff;border-left:1px solid #a0a0a0;border-top:1px solid #a0a0a0;border-right:1px solid #e6e6e6;border-bottom:1px solid #e6e6e6"></div>
<div class="ab" style="left:790px;top:26px;width:12px;height:12px;background:#fff;border-left:1px solid #a0a0a0;border-top:1px solid #a0a0a0;border-right:1px solid #e6e6e6;border-bottom:1px solid #e6e6e6"></div>
<div class="ab" style="left:846px;top:26px;width:12px;height:12px;background:#fff;border-left:1px solid #a0a0a0;border-top:1px solid #a0a0a0;border-right:1px solid #e6e6e6;border-bottom:1px solid #e6e6e6"></div>
<svg class="ab" style="left:846px;top:26px" width="12" height="12" viewBox="0 0 12 12"><path d="M2.8 5.8 L4.9 8.3 L9.2 3.2" fill="none" stroke="#000" stroke-width="2"/></svg>
<div class="ab" style="left:907px;top:26px;width:12px;height:12px;background:#fff;border-left:1px solid #a0a0a0;border-top:1px solid #a0a0a0;border-right:1px solid #e6e6e6;border-bottom:1px solid #e6e6e6"></div>
<div class="t" style="left:1071px;top:25px;">中盛广告公司</div>
<div class="ab" style="left:972px;top:26px;width:12px;height:12px;background:#fff;border-left:1px solid #a0a0a0;border-top:1px solid #a0a0a0;border-right:1px solid #e6e6e6;border-bottom:1px solid #e6e6e6"></div>
<div class="t" style="left:1150px;top:25px;color:#000">超级用户</div>
<div class="t" style="left:1207px;top:25px;color:#000">未指定</div>
<div class="t" style="left:377px;top:47px;color:#000">正常</div>
<div class="t" style="left:412px;top:46px;font-family:Liberation Mono,monospace;font-size:11px;letter-spacing:-0.6px;-webkit-text-stroke-width:0;color:#000">2017/8/23</div>
<div class="t" style="left:556px;top:47px;color:#000">心禾绿野仙</div>
<div class="ab" style="left:640px;top:48px;width:12px;height:12px;background:#fff;border-left:1px solid #a0a0a0;border-top:1px solid #a0a0a0;border-right:1px solid #e6e6e6;border-bottom:1px solid #e6e6e6"></div>
<div class="ab" style="left:690px;top:48px;width:12px;height:12px;background:#fff;border-left:1px solid #a0a0a0;border-top:1px solid #a0a0a0;border-right:1px solid #e6e6e6;border-bottom:1px solid #e6e6e6"></div>
<div class="ab" style="left:740px;top:48px;width:12px;height:12px;background:#fff;border-left:1px solid #a0a0a0;border-top:1px solid #a0a0a0;border-right:1px solid #e6e6e6;border-bottom:1px solid #e6e6e6"></div>
<div class="ab" style="left:790px;top:48px;width:12px;height:12px;background:#fff;border-left:1px solid #a0a0a0;border-top:1px solid #a0a0a0;border-right:1px solid #e6e6e6;border-bottom:1px solid #e6e6e6"></div>
<div class="ab" style="left:846px;top:48px;width:12px;height:12px;background:#fff;border-left:1px solid #a0a0a0;border-top:1px solid #a0a0a0;border-right:1px solid #e6e6e6;border-bottom:1px solid #e6e6e6"></div>
<svg class="ab" style="left:846px;top:48px" width="12" height="12" viewBox="0 0 12 12"><path d="M2.8 5.8 L4.9 8.3 L9.2 3.2" fill="none" stroke="#000" stroke-width="2"/></svg>
<div class="ab" style="left:907px;top:48px;width:12px;height:12px;background:#fff;border-left:1px solid #a0a0a0;border-top:1px solid #a0a0a0;border-right:1px solid #e6e6e6;border-bottom:1px solid #e6e6e6"></div>
<div class="t" style="left:1071px;top:47px;">中盛广告公司</div>
<div class="ab" style="left:972px;top:48px;width:12px;height:12px;background:#fff;border-left:1px solid #a0a0a0;border-top:1px solid #a0a0a0;border-right:1px solid #e6e6e6;border-bottom:1px solid #e6e6e6"></div>
<div class="t" style="left:1150px;top:47px;color:#000">超级用户</div>
<div class="t" style="left:1207px;top:47px;color:#000">未指定</div>
<div class="t" style="left:377px;top:69px;color:#000">正常</div>
<div class="t" style="left:412px;top:68px;font-family:Liberation Mono,monospace;font-size:11px;letter-spacing:-0.6px;-webkit-text-stroke-width:0;color:#000">2014/8/7</div>
<div class="t" style="left:556px;top:69px;color:#000">背胶</div>
<div class="ab" style="left:640px;top:70px;width:12px;height:12px;background:#fff;border-left:1px solid #a0a0a0;border-top:1px solid #a0a0a0;border-right:1px solid #e6e6e6;border-bottom:1px solid #e6e6e6"></div>
<svg class="ab" style="left:640px;top:70px" width="12" height="12" viewBox="0 0 12 12"><path d="M2.8 5.8 L4.9 8.3 L9.2 3.2" fill="none" stroke="#000" stroke-width="2"/></svg>
<div class="ab" style="left:690px;top:70px;width:12px;height:12px;background:#fff;border-left:1px solid #a0a0a0;border-top:1px solid #a0a0a0;border-right:1px solid #e6e6e6;border-bottom:1px solid #e6e6e6"></div>
<svg class="ab" style="left:690px;top:70px" width="12" height="12" viewBox="0 0 12 12"><path d="M2.8 5.8 L4.9 8.3 L9.2 3.2" fill="none" stroke="#000" stroke-width="2"/></svg>
<div class="ab" style="left:740px;top:70px;width:12px;height:12px;background:#fff;border-left:1px solid #a0a0a0;border-top:1px solid #a0a0a0;border-right:1px solid #e6e6e6;border-bottom:1px solid #e6e6e6"></div>
<div class="ab" style="left:790px;top:70px;width:12px;height:12px;background:#fff;border-left:1px solid #a0a0a0;border-top:1px solid #a0a0a0;border-right:1px solid #e6e6e6;border-bottom:1px solid #e6e6e6"></div>
<svg class="ab" style="left:790px;top:70px" width="12" height="12" viewBox="0 0 12 12"><path d="M2.8 5.8 L4.9 8.3 L9.2 3.2" fill="none" stroke="#000" stroke-width="2"/></svg>
<div class="ab" style="left:972px;top:70px;width:12px;height:12px;background:#fff;border-left:1px solid #a0a0a0;border-top:1px solid #a0a0a0;border-right:1px solid #e6e6e6;border-bottom:1px solid #e6e6e6"></div>
<div class="t" style="left:1150px;top:69px;color:#000">超级用户</div>
<div class="t" style="left:1207px;top:69px;color:#000">未指定</div>
<div class="t" style="left:1327px;top:68px;font-family:Liberation Mono,monospace;font-size:11px;letter-spacing:-0.6px;-webkit-text-stroke-width:0">2014-08-07</div>
<div class="t" style="left:377px;top:91px;color:#000">正常</div>
<div class="t" style="left:412px;top:90px;font-family:Liberation Mono,monospace;font-size:11px;letter-spacing:-0.6px;-webkit-text-stroke-width:0;color:#000">2014/8/7</div>
<div class="t" style="left:556px;top:91px;color:#000">灯布</div>
<div class="ab" style="left:640px;top:92px;width:12px;height:12px;background:#fff;border-left:1px solid #a0a0a0;border-top:1px solid #a0a0a0;border-right:1px solid #e6e6e6;border-bottom:1px solid #e6e6e6"></div>
<div class="ab" style="left:690px;top:92px;width:12px;height:12px;background:#fff;border-left:1px solid #a0a0a0;border-top:1px solid #a0a0a0;border-right:1px solid #e6e6e6;border-bottom:1px solid #e6e6e6"></div>
<svg class="ab" style="left:690px;top:92px" width="12" height="12" viewBox="0 0 12 12"><path d="M2.8 5.8 L4.9 8.3 L9.2 3.2" fill="none" stroke="#000" stroke-width="2"/></svg>
<div class="ab" style="left:740px;top:92px;width:12px;height:12px;background:#fff;border-left:1px solid #a0a0a0;border-top:1px solid #a0a0a0;border-right:1px solid #e6e6e6;border-bottom:1px solid #e6e6e6"></div>
<div class="ab" style="left:790px;top:92px;width:12px;height:12px;background:#fff;border-left:1px solid #a0a0a0;border-top:1px solid #a0a0a0;border-right:1px solid #e6e6e6;border-bottom:1px solid #e6e6e6"></div>
<svg class="ab" style="left:790px;top:92px" width="12" height="12" viewBox="0 0 12 12"><path d="M2.8 5.8 L4.9 8.3 L9.2 3.2" fill="none" stroke="#000" stroke-width="2"/></svg>
<div class="ab" style="left:972px;top:92px;width:12px;height:12px;background:#fff;border-left:1px solid #a0a0a0;border-top:1px solid #a0a0a0;border-right:1px solid #e6e6e6;border-bottom:1px solid #e6e6e6"></div>
<div class="t" style="left:1150px;top:91px;color:#000">超级用户</div>
<div class="t" style="left:1207px;top:91px;color:#000">未指定</div>
<div class="t" style="left:1327px;top:90px;font-family:Liberation Mono,monospace;font-size:11px;letter-spacing:-0.6px;-webkit-text-stroke-width:0">2014-08-07</div>
<div class="t" style="left:377px;top:113px;color:#000">正常</div>
<div class="t" style="left:412px;top:112px;font-family:Liberation Mono,monospace;font-size:11px;letter-spacing:-0.6px;-webkit-text-stroke-width:0;color:#000">2014/8/7</div>
<div class="t" style="left:556px;top:113px;color:#000">写真布</div>
<div class="ab" style="left:640px;top:114px;width:12px;height:12px;background:#fff;border-left:1px solid #a0a0a0;border-top:1px solid #a0a0a0;border-right:1px solid #e6e6e6;border-bottom:1px solid #e6e6e6"></div>
<div class="ab" style="left:690px;top:114px;width:12px;height:12px;background:#fff;border-left:1px solid #a0a0a0;border-top:1px solid #a0a0a0;border-right:1px solid #e6e6e6;border-bottom:1px solid #e6e6e6"></div>
<div class="ab" style="left:740px;top:114px;width:12px;height:12px;background:#fff;border-left:1px solid #a0a0a0;border-top:1px solid #a0a0a0;border-right:1px solid #e6e6e6;border-bottom:1px solid #e6e6e6"></div>
<div class="ab" style="left:790px;top:114px;width:12px;height:12px;background:#fff;border-left:1px solid #a0a0a0;border-top:1px solid #a0a0a0;border-right:1px solid #e6e6e6;border-bottom:1px solid #e6e6e6"></div>
<svg class="ab" style="left:790px;top:114px" width="12" height="12" viewBox="0 0 12 12"><path d="M2.8 5.8 L4.9 8.3 L9.2 3.2" fill="none" stroke="#000" stroke-width="2"/></svg>
<div class="ab" style="left:846px;top:114px;width:12px;height:12px;background:#fff;border-left:1px solid #a0a0a0;border-top:1px solid #a0a0a0;border-right:1px solid #e6e6e6;border-bottom:1px solid #e6e6e6"></div>
<svg class="ab" style="left:846px;top:114px" width="12" height="12" viewBox="0 0 12 12"><path d="M2.8 5.8 L4.9 8.3 L9.2 3.2" fill="none" stroke="#000" stroke-width="2"/></svg>
<div class="ab" style="left:907px;top:114px;width:12px;height:12px;background:#fff;border-left:1px solid #a0a0a0;border-top:1px solid #a0a0a0;border-right:1px solid #e6e6e6;border-bottom:1px solid #e6e6e6"></div>
<div class="t" style="left:1071px;top:113px;">中盛广告公司</div>
<div class="ab" style="left:972px;top:114px;width:12px;height:12px;background:#fff;border-left:1px solid #a0a0a0;border-top:1px solid #a0a0a0;border-right:1px solid #e6e6e6;border-bottom:1px solid #e6e6e6"></div>
<div class="t" style="left:1150px;top:113px;color:#000">超级用户</div>
<div class="t" style="left:1207px;top:113px;color:#000">未指定</div>
<div class="t" style="left:1327px;top:112px;font-family:Liberation Mono,monospace;font-size:11px;letter-spacing:-0.6px;-webkit-text-stroke-width:0">2014-08-07</div>
<div class="t" style="left:377px;top:135px;color:#000">正常</div>
<div class="t" style="left:412px;top:134px;font-family:Liberation Mono,monospace;font-size:11px;letter-spacing:-0.6px;-webkit-text-stroke-width:0;color:#000">2014/8/7</div>
<div class="t" style="left:556px;top:135px;color:#000">车身贴</div>
<div class="ab" style="left:640px;top:136px;width:12px;height:12px;background:#fff;border-left:1px solid #a0a0a0;border-top:1px solid #a0a0a0;border-right:1px solid #e6e6e6;border-bottom:1px solid #e6e6e6"></div>
<div class="ab" style="left:690px;top:136px;width:12px;height:12px;background:#fff;border-left:1px solid #a0a0a0;border-top:1px solid #a0a0a0;border-right:1px solid #e6e6e6;border-bottom:1px solid #e6e6e6"></div>
<div class="ab" style="left:740px;top:136px;width:12px;height:12px;background:#fff;border-left:1px solid #a0a0a0;border-top:1px solid #a0a0a0;border-right:1px solid #e6e6e6;border-bottom:1px solid #e6e6e6"></div>
<div class="ab" style="left:790px;top:136px;width:12px;height:12px;background:#fff;border-left:1px solid #a0a0a0;border-top:1px solid #a0a0a0;border-right:1px solid #e6e6e6;border-bottom:1px solid #e6e6e6"></div>
<svg class="ab" style="left:790px;top:136px" width="12" height="12" viewBox="0 0 12 12"><path d="M2.8 5.8 L4.9 8.3 L9.2 3.2" fill="none" stroke="#000" stroke-width="2"/></svg>
<div class="ab" style="left:846px;top:136px;width:12px;height:12px;background:#fff;border-left:1px solid #a0a0a0;border-top:1px solid #a0a0a0;border-right:1px solid #e6e6e6;border-bottom:1px solid #e6e6e6"></div>
<svg class="ab" style="left:846px;top:136px" width="12" height="12" viewBox="0 0 12 12"><path d="M2.8 5.8 L4.9 8.3 L9.2 3.2" fill="none" stroke="#000" stroke-width="2"/></svg>
<div class="ab" style="left:907px;top:136px;width:12px;height:12px;background:#fff;border-left:1px solid #a0a0a0;border-top:1px solid #a0a0a0;border-right:1px solid #e6e6e6;border-bottom:1px solid #e6e6e6"></div>
<div class="t" style="left:1071px;top:135px;">中盛广告公司</div>
<div class="ab" style="left:972px;top:136px;width:12px;height:12px;background:#fff;border-left:1px solid #a0a0a0;border-top:1px solid #a0a0a0;border-right:1px solid #e6e6e6;border-bottom:1px solid #e6e6e6"></div>
<div class="t" style="left:1150px;top:135px;color:#000">超级用户</div>
<div class="t" style="left:1207px;top:135px;color:#000">未指定</div>
<div class="t" style="left:1327px;top:134px;font-family:Liberation Mono,monospace;font-size:11px;letter-spacing:-0.6px;-webkit-text-stroke-width:0">2014-08-07</div>
<div class="t" style="left:377px;top:157px;color:#000">正常</div>
<div class="t" style="left:412px;top:156px;font-family:Liberation Mono,monospace;font-size:11px;letter-spacing:-0.6px;-webkit-text-stroke-width:0;color:#000">2014/8/7</div>
<div class="t" style="left:556px;top:157px;color:#000">背胶</div>
<div class="ab" style="left:640px;top:158px;width:12px;height:12px;background:#fff;border-left:1px solid #a0a0a0;border-top:1px solid #a0a0a0;border-right:1px solid #e6e6e6;border-bottom:1px solid #e6e6e6"></div>
<div class="ab" style="left:690px;top:158px;width:12px;height:12px;background:#fff;border-left:1px solid #a0a0a0;border-top:1px solid #a0a0a0;border-right:1px solid #e6e6e6;border-bottom:1px solid #e6e6e6"></div>
<div class="ab" style="left:740px;top:158px;width:12px;height:12px;background:#fff;border-left:1px solid #a0a0a0;border-top:1px solid #a0a0a0;border-right:1px solid #e6e6e6;border-bottom:1px solid #e6e6e6"></div>
<div class="ab" style="left:790px;top:158px;width:12px;height:12px;background:#fff;border-left:1px solid #a0a0a0;border-top:1px solid #a0a0a0;border-right:1px solid #e6e6e6;border-bottom:1px solid #e6e6e6"></div>
<div class="ab" style="left:972px;top:158px;width:12px;height:12px;background:#fff;border-left:1px solid #a0a0a0;border-top:1px solid #a0a0a0;border-right:1px solid #e6e6e6;border-bottom:1px solid #e6e6e6"></div>
<div class="t" style="left:1150px;top:157px;color:#000">超级用户</div>
<div class="t" style="left:1207px;top:157px;color:#000">未指定</div>
<div class="t" style="left:377px;top:179px;color:#000">正常</div>
<div class="t" style="left:412px;top:178px;font-family:Liberation Mono,monospace;font-size:11px;letter-spacing:-0.6px;-webkit-text-stroke-width:0;color:#000">2014/8/7</div>
<div class="t" style="left:556px;top:179px;color:#000">灯布</div>
<div class="ab" style="left:640px;top:180px;width:12px;height:12px;background:#fff;border-left:1px solid #a0a0a0;border-top:1px solid #a0a0a0;border-right:1px solid #e6e6e6;border-bottom:1px solid #e6e6e6"></div>
<div class="ab" style="left:690px;top:180px;width:12px;height:12px;background:#fff;border-left:1px solid #a0a0a0;border-top:1px solid #a0a0a0;border-right:1px solid #e6e6e6;border-bottom:1px solid #e6e6e6"></div>
<div class="ab" style="left:740px;top:180px;width:12px;height:12px;background:#fff;border-left:1px solid #a0a0a0;border-top:1px solid #a0a0a0;border-right:1px solid #e6e6e6;border-bottom:1px solid #e6e6e6"></div>
<div class="ab" style="left:790px;top:180px;width:12px;height:12px;background:#fff;border-left:1px solid #a0a0a0;border-top:1px solid #a0a0a0;border-right:1px solid #e6e6e6;border-bottom:1px solid #e6e6e6"></div>
<div class="ab" style="left:972px;top:180px;width:12px;height:12px;background:#fff;border-left:1px solid #a0a0a0;border-top:1px solid #a0a0a0;border-right:1px solid #e6e6e6;border-bottom:1px solid #e6e6e6"></div>
<div class="t" style="left:1150px;top:179px;color:#000">超级用户</div>
<div class="t" style="left:1207px;top:179px;color:#000">未指定</div>
<div class="t" style="left:377px;top:201px;color:#000">正常</div>
<div class="t" style="left:412px;top:200px;font-family:Liberation Mono,monospace;font-size:11px;letter-spacing:-0.6px;-webkit-text-stroke-width:0;color:#000">2014/8/7</div>
<div class="t" style="left:556px;top:201px;color:#000">写真布</div>
<div class="ab" style="left:640px;top:202px;width:12px;height:12px;background:#fff;border-left:1px solid #a0a0a0;border-top:1px solid #a0a0a0;border-right:1px solid #e6e6e6;border-bottom:1px solid #e6e6e6"></div>
<div class="ab" style="left:690px;top:202px;width:12px;height:12px;background:#fff;border-left:1px solid #a0a0a0;border-top:1px solid #a0a0a0;border-right:1px solid #e6e6e6;border-bottom:1px solid #e6e6e6"></div>
<div class="ab" style="left:740px;top:202px;width:12px;height:12px;background:#fff;border-left:1px solid #a0a0a0;border-top:1px solid #a0a0a0;border-right:1px solid #e6e6e6;border-bottom:1px solid #e6e6e6"></div>
<div class="ab" style="left:790px;top:202px;width:12px;height:12px;background:#fff;border-left:1px solid #a0a0a0;border-top:1px solid #a0a0a0;border-right:1px solid #e6e6e6;border-bottom:1px solid #e6e6e6"></div>
<div class="ab" style="left:972px;top:202px;width:12px;height:12px;background:#fff;border-left:1px solid #a0a0a0;border-top:1px solid #a0a0a0;border-right:1px solid #e6e6e6;border-bottom:1px solid #e6e6e6"></div>
<div class="t" style="left:1150px;top:201px;color:#000">超级用户</div>
<div class="t" style="left:1207px;top:201px;color:#000">未指定</div>
<div class="t" style="left:377px;top:223px;color:#000">正常</div>
<div class="t" style="left:412px;top:222px;font-family:Liberation Mono,monospace;font-size:11px;letter-spacing:-0.6px;-webkit-text-stroke-width:0;color:#000">2014/8/7</div>
<div class="t" style="left:556px;top:223px;color:#000">车身贴</div>
<div class="ab" style="left:640px;top:224px;width:12px;height:12px;background:#fff;border-left:1px solid #a0a0a0;border-top:1px solid #a0a0a0;border-right:1px solid #e6e6e6;border-bottom:1px solid #e6e6e6"></div>
<div class="ab" style="left:690px;top:224px;width:12px;height:12px;background:#fff;border-left:1px solid #a0a0a0;border-top:1px solid #a0a0a0;border-right:1px solid #e6e6e6;border-bottom:1px solid #e6e6e6"></div>
<div class="ab" style="left:740px;top:224px;width:12px;height:12px;background:#fff;border-left:1px solid #a0a0a0;border-top:1px solid #a0a0a0;border-right:1px solid #e6e6e6;border-bottom:1px solid #e6e6e6"></div>
<div class="ab" style="left:790px;top:224px;width:12px;height:12px;background:#fff;border-left:1px solid #a0a0a0;border-top:1px solid #a0a0a0;border-right:1px solid #e6e6e6;border-bottom:1px solid #e6e6e6"></div>
<div class="ab" style="left:972px;top:224px;width:12px;height:12px;background:#fff;border-left:1px solid #a0a0a0;border-top:1px solid #a0a0a0;border-right:1px solid #e6e6e6;border-bottom:1px solid #e6e6e6"></div>
<div class="t" style="left:1150px;top:223px;color:#000">超级用户</div>
<div class="t" style="left:1207px;top:223px;color:#000">未指定</div>
<div class="t" style="left:377px;top:245px;color:#000">正常</div>
<div class="t" style="left:412px;top:244px;font-family:Liberation Mono,monospace;font-size:11px;letter-spacing:-0.6px;-webkit-text-stroke-width:0;color:#000">2014/8/7</div>
<div class="t" style="left:556px;top:245px;color:#000">背胶</div>
<div class="ab" style="left:640px;top:246px;width:12px;height:12px;background:#fff;border-left:1px solid #a0a0a0;border-top:1px solid #a0a0a0;border-right:1px solid #e6e6e6;border-bottom:1px solid #e6e6e6"></div>
<svg class="ab" style="left:640px;top:246px" width="12" height="12" viewBox="0 0 12 12"><path d="M2.8 5.8 L4.9 8.3 L9.2 3.2" fill="none" stroke="#000" stroke-width="2"/></svg>
<div class="ab" style="left:690px;top:246px;width:12px;height:12px;background:#fff;border-left:1px solid #a0a0a0;border-top:1px solid #a0a0a0;border-right:1px solid #e6e6e6;border-bottom:1px solid #e6e6e6"></div>
<svg class="ab" style="left:690px;top:246px" width="12" height="12" viewBox="0 0 12 12"><path d="M2.8 5.8 L4.9 8.3 L9.2 3.2" fill="none" stroke="#000" stroke-width="2"/></svg>
<div class="ab" style="left:740px;top:246px;width:12px;height:12px;background:#fff;border-left:1px solid #a0a0a0;border-top:1px solid #a0a0a0;border-right:1px solid #e6e6e6;border-bottom:1px solid #e6e6e6"></div>
<div class="ab" style="left:790px;top:246px;width:12px;height:12px;background:#fff;border-left:1px solid #a0a0a0;border-top:1px solid #a0a0a0;border-right:1px solid #e6e6e6;border-bottom:1px solid #e6e6e6"></div>
<svg class="ab" style="left:790px;top:246px" width="12" height="12" viewBox="0 0 12 12"><path d="M2.8 5.8 L4.9 8.3 L9.2 3.2" fill="none" stroke="#000" stroke-width="2"/></svg>
<div class="ab" style="left:972px;top:246px;width:12px;height:12px;background:#fff;border-left:1px solid #a0a0a0;border-top:1px solid #a0a0a0;border-right:1px solid #e6e6e6;border-bottom:1px solid #e6e6e6"></div>
<div class="t" style="left:1150px;top:245px;color:#000">超级用户</div>
<div class="t" style="left:1207px;top:245px;color:#000">未指定</div>
<div class="t" style="left:1327px;top:244px;font-family:Liberation Mono,monospace;font-size:11px;letter-spacing:-0.6px;-webkit-text-stroke-width:0">2014-08-07</div>
<div class="t" style="left:377px;top:267px;color:#000">正常</div>
<div class="t" style="left:412px;top:266px;font-family:Liberation Mono,monospace;font-size:11px;letter-spacing:-0.6px;-webkit-text-stroke-width:0;color:#000">2014/8/7</div>
<div class="t" style="left:556px;top:267px;color:#000">背胶</div>
<div class="ab" style="left:640px;top:268px;width:12px;height:12px;background:#fff;border-left:1px solid #a0a0a0;border-top:1px solid #a0a0a0;border-right:1px solid #e6e6e6;border-bottom:1px solid #e6e6e6"></div>
<svg class="ab" style="left:640px;top:268px" width="12" height="12" viewBox="0 0 12 12"><path d="M2.8 5.8 L4.9 8.3 L9.2 3.2" fill="none" stroke="#000" stroke-width="2"/></svg>
<div class="ab" style="left:690px;top:268px;width:12px;height:12px;background:#fff;border-left:1px solid #a0a0a0;border-top:1px solid #a0a0a0;border-right:1px solid #e6e6e6;border-bottom:1px solid #e6e6e6"></div>
<svg class="ab" style="left:690px;top:268px" width="12" height="12" viewBox="0 0 12 12"><path d="M2.8 5.8 L4.9 8.3 L9.2 3.2" fill="none" stroke="#000" stroke-width="2"/></svg>
<div class="ab" style="left:740px;top:268px;width:12px;height:12px;background:#fff;border-left:1px solid #a0a0a0;border-top:1px solid #a0a0a0;border-right:1px solid #e6e6e6;border-bottom:1px solid #e6e6e6"></div>
<div class="ab" style="left:790px;top:268px;width:12px;height:12px;background:#fff;border-left:1px solid #a0a0a0;border-top:1px solid #a0a0a0;border-right:1px solid #e6e6e6;border-bottom:1px solid #e6e6e6"></div>
<svg class="ab" style="left:790px;top:268px" width="12" height="12" viewBox="0 0 12 12"><path d="M2.8 5.8 L4.9 8.3 L9.2 3.2" fill="none" stroke="#000" stroke-width="2"/></svg>
<div class="ab" style="left:972px;top:268px;width:12px;height:12px;background:#fff;border-left:1px solid #a0a0a0;border-top:1px solid #a0a0a0;border-right:1px solid #e6e6e6;border-bottom:1px solid #e6e6e6"></div>
<div class="t" style="left:1150px;top:267px;color:#000">超级用户</div>
<div class="t" style="left:1207px;top:267px;color:#000">未指定</div>
<div class="t" style="left:1327px;top:266px;font-family:Liberation Mono,monospace;font-size:11px;letter-spacing:-0.6px;-webkit-text-stroke-width:0">2014-08-07</div>
<div class="t" style="left:377px;top:289px;color:#000">正常</div>
<div class="t" style="left:412px;top:288px;font-family:Liberation Mono,monospace;font-size:11px;letter-spacing:-0.6px;-webkit-text-stroke-width:0;color:#000">2014/8/7</div>
<div class="t" style="left:556px;top:289px;color:#000">背胶</div>
<div class="ab" style="left:640px;top:290px;width:12px;height:12px;background:#fff;border-left:1px solid #a0a0a0;border-top:1px solid #a0a0a0;border-right:1px solid #e6e6e6;border-bottom:1px solid #e6e6e6"></div>
<svg class="ab" style="left:640px;top:290px" width="12" height="12" viewBox="0 0 12 12"><path d="M2.8 5.8 L4.9 8.3 L9.2 3.2" fill="none" stroke="#000" stroke-width="2"/></svg>
<div class="ab" style="left:690px;top:290px;width:12px;height:12px;background:#fff;border-left:1px solid #a0a0a0;border-top:1px solid #a0a0a0;border-right:1px solid #e6e6e6;border-bottom:1px solid #e6e6e6"></div>
<svg class="ab" style="left:690px;top:290px" width="12" height="12" viewBox="0 0 12 12"><path d="M2.8 5.8 L4.9 8.3 L9.2 3.2" fill="none" stroke="#000" stroke-width="2"/></svg>
<div class="ab" style="left:740px;top:290px;width:12px;height:12px;background:#fff;border-left:1px solid #a0a0a0;border-top:1px solid #a0a0a0;border-right:1px solid #e6e6e6;border-bottom:1px solid #e6e6e6"></div>
<div class="ab" style="left:790px;top:290px;width:12px;height:12px;background:#fff;border-left:1px solid #a0a0a0;border-top:1px solid #a0a0a0;border-right:1px solid #e6e6e6;border-bottom:1px solid #e6e6e6"></div>
<svg class="ab" style="left:790px;top:290px" width="12" height="12" viewBox="0 0 12 12"><path d="M2.8 5.8 L4.9 8.3 L9.2 3.2" fill="none" stroke="#000" stroke-width="2"/></svg>
<div class="ab" style="left:972px;top:290px;width:12px;height:12px;background:#fff;border-left:1px solid #a0a0a0;border-top:1px solid #a0a0a0;border-right:1px solid #e6e6e6;border-bottom:1px solid #e6e6e6"></div>
<div class="t" style="left:1150px;top:289px;color:#000">超级用户</div>
<div class="t" style="left:1207px;top:289px;color:#000">未指定</div>
<div class="t" style="left:1327px;top:288px;font-family:Liberation Mono,monospace;font-size:11px;letter-spacing:-0.6px;-webkit-text-stroke-width:0">2014-08-07</div>
<div class="t" style="left:377px;top:311px;color:#000">正常</div>
<div class="t" style="left:412px;top:310px;font-family:Liberation Mono,monospace;font-size:11px;letter-spacing:-0.6px;-webkit-text-stroke-width:0;color:#000">2014/8/7</div>
<div class="t" style="left:556px;top:311px;color:#000">背胶</div>
<div class="ab" style="left:640px;top:312px;width:12px;height:12px;background:#fff;border-left:1px solid #a0a0a0;border-top:1px solid #a0a0a0;border-right:1px solid #e6e6e6;border-bottom:1px solid #e6e6e6"></div>
<svg class="ab" style="left:640px;top:312px" width="12" height="12" viewBox="0 0 12 12"><path d="M2.8 5.8 L4.9 8.3 L9.2 3.2" fill="none" stroke="#000" stroke-width="2"/></svg>
<div class="ab" style="left:690px;top:312px;width:12px;height:12px;background:#fff;border-left:1px solid #a0a0a0;border-top:1px solid #a0a0a0;border-right:1px solid #e6e6e6;border-bottom:1px solid #e6e6e6"></div>
<svg class="ab" style="left:690px;top:312px" width="12" height="12" viewBox="0 0 12 12"><path d="M2.8 5.8 L4.9 8.3 L9.2 3.2" fill="none" stroke="#000" stroke-width="2"/></svg>
<div class="ab" style="left:740px;top:312px;width:12px;height:12px;background:#fff;border-left:1px solid #a0a0a0;border-top:1px solid #a0a0a0;border-right:1px solid #e6e6e6;border-bottom:1px solid #e6e6e6"></div>
<div class="ab" style="left:790px;top:312px;width:12px;height:12px;background:#fff;border-left:1px solid #a0a0a0;border-top:1px solid #a0a0a0;border-right:1px solid #e6e6e6;border-bottom:1px solid #e6e6e6"></div>
<svg class="ab" style="left:790px;top:312px" width="12" height="12" viewBox="0 0 12 12"><path d="M2.8 5.8 L4.9 8.3 L9.2 3.2" fill="none" stroke="#000" stroke-width="2"/></svg>
<div class="ab" style="left:972px;top:312px;width:12px;height:12px;background:#fff;border-left:1px solid #a0a0a0;border-top:1px solid #a0a0a0;border-right:1px solid #e6e6e6;border-bottom:1px solid #e6e6e6"></div>
<div class="t" style="left:1150px;top:311px;color:#000">超级用户</div>
<div class="t" style="left:1207px;top:311px;color:#000">未指定</div>
<div class="t" style="left:1327px;top:310px;font-family:Liberation Mono,monospace;font-size:11px;letter-spacing:-0.6px;-webkit-text-stroke-width:0">2014-08-07</div>
<div class="t" style="left:377px;top:333px;color:#000">正常</div>
<div class="t" style="left:412px;top:332px;font-family:Liberation Mono,monospace;font-size:11px;letter-spacing:-0.6px;-webkit-text-stroke-width:0;color:#000">2014/8/7</div>
<div class="t" style="left:556px;top:333px;color:#000">车身贴</div>
<div class="ab" style="left:640px;top:334px;width:12px;height:12px;background:#fff;border-left:1px solid #a0a0a0;border-top:1px solid #a0a0a0;border-right:1px solid #e6e6e6;border-bottom:1px solid #e6e6e6"></div>
<svg class="ab" style="left:640px;top:334px" width="12" height="12" viewBox="0 0 12 12"><path d="M2.8 5.8 L4.9 8.3 L9.2 3.2" fill="none" stroke="#000" stroke-width="2"/></svg>
<div class="ab" style="left:690px;top:334px;width:12px;height:12px;background:#fff;border-left:1px solid #a0a0a0;border-top:1px solid #a0a0a0;border-right:1px solid #e6e6e6;border-bottom:1px solid #e6e6e6"></div>
<svg class="ab" style="left:690px;top:334px" width="12" height="12" viewBox="0 0 12 12"><path d="M2.8 5.8 L4.9 8.3 L9.2 3.2" fill="none" stroke="#000" stroke-width="2"/></svg>
<div class="ab" style="left:740px;top:334px;width:12px;height:12px;background:#fff;border-left:1px solid #a0a0a0;border-top:1px solid #a0a0a0;border-right:1px solid #e6e6e6;border-bottom:1px solid #e6e6e6"></div>
<div class="ab" style="left:790px;top:334px;width:12px;height:12px;background:#fff;border-left:1px solid #a0a0a0;border-top:1px solid #a0a0a0;border-right:1px solid #e6e6e6;border-bottom:1px solid #e6e6e6"></div>
<svg class="ab" style="left:790px;top:334px" width="12" height="12" viewBox="0 0 12 12"><path d="M2.8 5.8 L4.9 8.3 L9.2 3.2" fill="none" stroke="#000" stroke-width="2"/></svg>
<div class="ab" style="left:972px;top:334px;width:12px;height:12px;background:#fff;border-left:1px solid #a0a0a0;border-top:1px solid #a0a0a0;border-right:1px solid #e6e6e6;border-bottom:1px solid #e6e6e6"></div>
<div class="t" style="left:1150px;top:333px;color:#000">超级用户</div>
<div class="t" style="left:1207px;top:333px;color:#000">未指定</div>
<div class="t" style="left:1327px;top:332px;font-family:Liberation Mono,monospace;font-size:11px;letter-spacing:-0.6px;-webkit-text-stroke-width:0">2014-08-07</div>
<div class="t" style="left:377px;top:355px;color:#000">正常</div>
<div class="t" style="left:412px;top:354px;font-family:Liberation Mono,monospace;font-size:11px;letter-spacing:-0.6px;-webkit-text-stroke-width:0;color:#000">2014/8/7</div>
<div class="t" style="left:556px;top:355px;color:#000">灯布</div>
<div class="ab" style="left:640px;top:356px;width:12px;height:12px;background:#fff;border-left:1px solid #a0a0a0;border-top:1px solid #a0a0a0;border-right:1px solid #e6e6e6;border-bottom:1px solid #e6e6e6"></div>
<svg class="ab" style="left:640px;top:356px" width="12" height="12" viewBox="0 0 12 12"><path d="M2.8 5.8 L4.9 8.3 L9.2 3.2" fill="none" stroke="#000" stroke-width="2"/></svg>
<div class="ab" style="left:690px;top:356px;width:12px;height:12px;background:#fff;border-left:1px solid #a0a0a0;border-top:1px solid #a0a0a0;border-right:1px solid #e6e6e6;border-bottom:1px solid #e6e6e6"></div>
<svg class="ab" style="left:690px;top:356px" width="12" height="12" viewBox="0 0 12 12"><path d="M2.8 5.8 L4.9 8.3 L9.2 3.2" fill="none" stroke="#000" stroke-width="2"/></svg>
<div class="ab" style="left:740px;top:356px;width:12px;height:12px;background:#fff;border-left:1px solid #a0a0a0;border-top:1px solid #a0a0a0;border-right:1px solid #e6e6e6;border-bottom:1px solid #e6e6e6"></div>
<div class="ab" style="left:790px;top:356px;width:12px;height:12px;background:#fff;border-left:1px solid #a0a0a0;border-top:1px solid #a0a0a0;border-right:1px solid #e6e6e6;border-bottom:1px solid #e6e6e6"></div>
<svg class="ab" style="left:790px;top:356px" width="12" height="12" viewBox="0 0 12 12"><path d="M2.8 5.8 L4.9 8.3 L9.2 3.2" fill="none" stroke="#000" stroke-width="2"/></svg>
<div class="ab" style="left:972px;top:356px;width:12px;height:12px;background:#fff;border-left:1px solid #a0a0a0;border-top:1px solid #a0a0a0;border-right:1px solid #e6e6e6;border-bottom:1px solid #e6e6e6"></div>
<div class="t" style="left:1150px;top:355px;color:#000">超级用户</div>
<div class="t" style="left:1207px;top:355px;color:#000">未指定</div>
<div class="t" style="left:1327px;top:354px;font-family:Liberation Mono,monospace;font-size:11px;letter-spacing:-0.6px;-webkit-text-stroke-width:0">2014-08-07</div>
<div class="t" style="left:377px;top:377px;color:#000">正常</div>
<div class="t" style="left:412px;top:376px;font-family:Liberation Mono,monospace;font-size:11px;letter-spacing:-0.6px;-webkit-text-stroke-width:0;color:#000">2014/8/7</div>
<div class="t" style="left:556px;top:377px;color:#000">写真布</div>
<div class="ab" style="left:640px;top:378px;width:12px;height:12px;background:#fff;border-left:1px solid #a0a0a0;border-top:1px solid #a0a0a0;border-right:1px solid #e6e6e6;border-bottom:1px solid #e6e6e6"></div>
<svg class="ab" style="left:640px;top:378px" width="12" height="12" viewBox="0 0 12 12"><path d="M2.8 5.8 L4.9 8.3 L9.2 3.2" fill="none" stroke="#000" stroke-width="2"/></svg>
<div class="ab" style="left:690px;top:378px;width:12px;height:12px;background:#fff;border-left:1px solid #a0a0a0;border-top:1px solid #a0a0a0;border-right:1px solid #e6e6e6;border-bottom:1px solid #e6e6e6"></div>
<svg class="ab" style="left:690px;top:378px" width="12" height="12" viewBox="0 0 12 12"><path d="M2.8 5.8 L4.9 8.3 L9.2 3.2" fill="none" stroke="#000" stroke-width="2"/></svg>
<div class="ab" style="left:740px;top:378px;width:12px;height:12px;background:#fff;border-left:1px solid #a0a0a0;border-top:1px solid #a0a0a0;border-right:1px solid #e6e6e6;border-bottom:1px solid #e6e6e6"></div>
<div class="ab" style="left:790px;top:378px;width:12px;height:12px;background:#fff;border-left:1px solid #a0a0a0;border-top:1px solid #a0a0a0;border-right:1px solid #e6e6e6;border-bottom:1px solid #e6e6e6"></div>
<svg class="ab" style="left:790px;top:378px" width="12" height="12" viewBox="0 0 12 12"><path d="M2.8 5.8 L4.9 8.3 L9.2 3.2" fill="none" stroke="#000" stroke-width="2"/></svg>
<div class="ab" style="left:972px;top:378px;width:12px;height:12px;background:#fff;border-left:1px solid #a0a0a0;border-top:1px solid #a0a0a0;border-right:1px solid #e6e6e6;border-bottom:1px solid #e6e6e6"></div>
<div class="t" style="left:1150px;top:377px;color:#000">超级用户</div>
<div class="t" style="left:1207px;top:377px;color:#000">未指定</div>
<div class="t" style="left:1327px;top:376px;font-family:Liberation Mono,monospace;font-size:11px;letter-spacing:-0.6px;-webkit-text-stroke-width:0">2014-08-07</div>
<div class="t" style="left:377px;top:399px;color:#808080">正常</div>
<div class="t" style="left:412px;top:398px;font-family:Liberation Mono,monospace;font-size:11px;letter-spacing:-0.6px;-webkit-text-stroke-width:0;color:#808080">2013/12/18</div>
<div class="t" style="left:557px;top:400px;font-family:Liberation Mono,monospace;font-size:11px;letter-spacing:-0.6px;-webkit-text-stroke-width:0;color:#808080">3</div>
<div class="ab" style="left:640px;top:400px;width:12px;height:12px;background:#fff;border-left:1px solid #a0a0a0;border-top:1px solid #a0a0a0;border-right:1px solid #e6e6e6;border-bottom:1px solid #e6e6e6"></div>
<div class="ab" style="left:690px;top:400px;width:12px;height:12px;background:#fff;border-left:1px solid #a0a0a0;border-top:1px solid #a0a0a0;border-right:1px solid #e6e6e6;border-bottom:1px solid #e6e6e6"></div>
<div class="ab" style="left:740px;top:400px;width:12px;height:12px;background:#fff;border-left:1px solid #a0a0a0;border-top:1px solid #a0a0a0;border-right:1px solid #e6e6e6;border-bottom:1px solid #e6e6e6"></div>
<div class="ab" style="left:790px;top:400px;width:12px;height:12px;background:#fff;border-left:1px solid #a0a0a0;border-top:1px solid #a0a0a0;border-right:1px solid #e6e6e6;border-bottom:1px solid #e6e6e6"></div>
<div class="ab" style="left:972px;top:400px;width:12px;height:12px;background:#fff;border-left:1px solid #a0a0a0;border-top:1px solid #a0a0a0;border-right:1px solid #e6e6e6;border-bottom:1px solid #e6e6e6"></div>
<div class="t" style="left:1150px;top:399px;color:#808080">超级用户</div>
<div class="t" style="left:1207px;top:399px;color:#808080">未指定</div>
<div class="t" style="left:377px;top:421px;color:#808080">正常</div>
<div class="t" style="left:412px;top:420px;font-family:Liberation Mono,monospace;font-size:11px;letter-spacing:-0.6px;-webkit-text-stroke-width:0;color:#808080">2013/10/15</div>
<div class="t" style="left:557px;top:422px;font-family:Liberation Mono,monospace;font-size:11px;letter-spacing:-0.6px;-webkit-text-stroke-width:0;color:#808080">0.12-0.06-</div>
<div class="ab" style="left:640px;top:422px;width:12px;height:12px;background:#fff;border-left:1px solid #a0a0a0;border-top:1px solid #a0a0a0;border-right:1px solid #e6e6e6;border-bottom:1px solid #e6e6e6"></div>
<div class="ab" style="left:690px;top:422px;width:12px;height:12px;background:#fff;border-left:1px solid #a0a0a0;border-top:1px solid #a0a0a0;border-right:1px solid #e6e6e6;border-bottom:1px solid #e6e6e6"></div>
<div class="ab" style="left:740px;top:422px;width:12px;height:12px;background:#fff;border-left:1px solid #a0a0a0;border-top:1px solid #a0a0a0;border-right:1px solid #e6e6e6;border-bottom:1px solid #e6e6e6"></div>
<div class="ab" style="left:790px;top:422px;width:12px;height:12px;background:#fff;border-left:1px solid #a0a0a0;border-top:1px solid #a0a0a0;border-right:1px solid #e6e6e6;border-bottom:1px solid #e6e6e6"></div>
<div class="ab" style="left:972px;top:422px;width:12px;height:12px;background:#fff;border-left:1px solid #a0a0a0;border-top:1px solid #a0a0a0;border-right:1px solid #e6e6e6;border-bottom:1px solid #e6e6e6"></div>
<div class="t" style="left:1150px;top:421px;color:#808080">王五</div>
<div class="t" style="left:1207px;top:421px;color:#808080">未指定</div>
<div class="t" style="left:377px;top:443px;color:#808080">正常</div>
<div class="t" style="left:412px;top:442px;font-family:Liberation Mono,monospace;font-size:11px;letter-spacing:-0.6px;-webkit-text-stroke-width:0;color:#808080">2013/10/15</div>
<div class="t" style="left:557px;top:444px;font-family:Liberation Mono,monospace;font-size:11px;letter-spacing:-0.6px;-webkit-text-stroke-width:0;color:#808080">0.24-0.08-</div>
<div class="ab" style="left:640px;top:444px;width:12px;height:12px;background:#fff;border-left:1px solid #a0a0a0;border-top:1px solid #a0a0a0;border-right:1px solid #e6e6e6;border-bottom:1px solid #e6e6e6"></div>
<div class="ab" style="left:690px;top:444px;width:12px;height:12px;background:#fff;border-left:1px solid #a0a0a0;border-top:1px solid #a0a0a0;border-right:1px solid #e6e6e6;border-bottom:1px solid #e6e6e6"></div>
<div class="ab" style="left:740px;top:444px;width:12px;height:12px;background:#fff;border-left:1px solid #a0a0a0;border-top:1px solid #a0a0a0;border-right:1px solid #e6e6e6;border-bottom:1px solid #e6e6e6"></div>
<div class="ab" style="left:790px;top:444px;width:12px;height:12px;background:#fff;border-left:1px solid #a0a0a0;border-top:1px solid #a0a0a0;border-right:1px solid #e6e6e6;border-bottom:1px solid #e6e6e6"></div>
<div class="ab" style="left:972px;top:444px;width:12px;height:12px;background:#fff;border-left:1px solid #a0a0a0;border-top:1px solid #a0a0a0;border-right:1px solid #e6e6e6;border-bottom:1px solid #e6e6e6"></div>
<div class="t" style="left:1150px;top:443px;color:#808080">王五</div>
<div class="t" style="left:1207px;top:443px;color:#808080">未指定</div>
<div class="t" style="left:377px;top:465px;color:#808080">正常</div>
<div class="t" style="left:412px;top:464px;font-family:Liberation Mono,monospace;font-size:11px;letter-spacing:-0.6px;-webkit-text-stroke-width:0;color:#808080">2013/10/15</div>
<div class="t" style="left:557px;top:466px;font-family:Liberation Mono,monospace;font-size:11px;letter-spacing:-0.6px;-webkit-text-stroke-width:0;color:#808080">0.24-0.09-</div>
<div class="ab" style="left:640px;top:466px;width:12px;height:12px;background:#fff;border-left:1px solid #a0a0a0;border-top:1px solid #a0a0a0;border-right:1px solid #e6e6e6;border-bottom:1px solid #e6e6e6"></div>
<div class="ab" style="left:690px;top:466px;width:12px;height:12px;background:#fff;border-left:1px solid #a0a0a0;border-top:1px solid #a0a0a0;border-right:1px solid #e6e6e6;border-bottom:1px solid #e6e6e6"></div>
<div class="ab" style="left:740px;top:466px;width:12px;height:12px;background:#fff;border-left:1px solid #a0a0a0;border-top:1px solid #a0a0a0;border-right:1px solid #e6e6e6;border-bottom:1px solid #e6e6e6"></div>
<div class="ab" style="left:790px;top:466px;width:12px;height:12px;background:#fff;border-left:1px solid #a0a0a0;border-top:1px solid #a0a0a0;border-right:1px solid #e6e6e6;border-bottom:1px solid #e6e6e6"></div>
<div class="ab" style="left:972px;top:466px;width:12px;height:12px;background:#fff;border-left:1px solid #a0a0a0;border-top:1px solid #a0a0a0;border-right:1px solid #e6e6e6;border-bottom:1px solid #e6e6e6"></div>
<div class="t" style="left:1150px;top:465px;color:#808080">王五</div>
<div class="t" style="left:1207px;top:465px;color:#808080">未指定</div>
<div class="t" style="left:377px;top:487px;color:#808080">正常</div>
<div class="t" style="left:412px;top:486px;font-family:Liberation Mono,monospace;font-size:11px;letter-spacing:-0.6px;-webkit-text-stroke-width:0;color:#808080">2013/10/15</div>
<div class="t" style="left:557px;top:488px;font-family:Liberation Mono,monospace;font-size:11px;letter-spacing:-0.6px;-webkit-text-stroke-width:0;color:#808080">0.24-0.09-</div>
<div class="ab" style="left:640px;top:488px;width:12px;height:12px;background:#fff;border-left:1px solid #a0a0a0;border-top:1px solid #a0a0a0;border-right:1px solid #e6e6e6;border-bottom:1px solid #e6e6e6"></div>
<div class="ab" style="left:690px;top:488px;width:12px;height:12px;background:#fff;border-left:1px solid #a0a0a0;border-top:1px solid #a0a0a0;border-right:1px solid #e6e6e6;border-bottom:1px solid #e6e6e6"></div>
<div class="ab" style="left:740px;top:488px;width:12px;height:12px;background:#fff;border-left:1px solid #a0a0a0;border-top:1px solid #a0a0a0;border-right:1px solid #e6e6e6;border-bottom:1px solid #e6e6e6"></div>
<div class="ab" style="left:790px;top:488px;width:12px;height:12px;background:#fff;border-left:1px solid #a0a0a0;border-top:1px solid #a0a0a0;border-right:1px solid #e6e6e6;border-bottom:1px solid #e6e6e6"></div>
<div class="ab" style="left:972px;top:488px;width:12px;height:12px;background:#fff;border-left:1px solid #a0a0a0;border-top:1px solid #a0a0a0;border-right:1px solid #e6e6e6;border-bottom:1px solid #e6e6e6"></div>
<div class="t" style="left:1150px;top:487px;color:#808080">王五</div>
<div class="t" style="left:1207px;top:487px;color:#808080">未指定</div>
<svg class="ab" style="left:489px;top:-1px" width="66" height="66" viewBox="524 315 66 66">
<rect x="550" y="317" width="13" height="19" fill="#f8d800" stroke="#f0a000" stroke-width="0.8"/>
<g fill="#202020"><rect x="552" y="320" width="2" height="1"/><rect x="555" y="320" width="5" height="1" fill="#d02020"/><rect x="552" y="323" width="3" height="1"/><rect x="557" y="323" width="4" height="1"/><rect x="552" y="326" width="4" height="1"/><rect x="557" y="326" width="1" height="1" fill="#e02020"/><rect x="559" y="326" width="2" height="1"/><rect x="553" y="329" width="3" height="1"/><rect x="557" y="329" width="3" height="1" fill="#e02020"/><rect x="552" y="331" width="9" height="1" fill="#4040c0"/><rect x="552" y="333" width="9" height="1.5" fill="#806020"/></g>
<rect x="540" y="339" width="33" height="19" fill="#6c9ad8"/>
<rect x="540" y="339" width="13" height="19" fill="#a05a28"/>
<g fill="#d88a40"><circle cx="543" cy="343" r="2.2"/><circle cx="549" cy="345" r="2.4"/><circle cx="544" cy="350" r="2.5"/><circle cx="550" cy="354" r="2.3"/><circle cx="543.5" cy="355.5" r="1.8"/></g>
<rect x="553" y="343" width="17" height="4" fill="#ffffff" opacity="0.85"/>
<rect x="562" y="349" width="6" height="2" fill="#e86020"/>
<rect x="526" y="368" width="62" height="5" fill="#ecebb8"/>
<g fill="#e04090"><rect x="528" y="369" width="3" height="2"/><rect x="534" y="370" width="2" height="2"/><rect x="540" y="369" width="3" height="2"/><rect x="547" y="370" width="2" height="2"/><rect x="553" y="369" width="3" height="3"/><rect x="560" y="370" width="2" height="2"/><rect x="565" y="369" width="4" height="2"/><rect x="572" y="370" width="3" height="2"/><rect x="578" y="369" width="3" height="2"/><rect x="584" y="370" width="3" height="2"/></g>
</svg>
<div class="ab" style="left:410px;top:154px;width:109px;height:22px;background:#ffffe8;border:1px solid #707070"></div>
<div class="t" style="left:412px;top:157px;font-size:13px;color:#101030">2014/8/7 10:07:02</div>
</div>
<div class="ab" style="left:35px;top:819px;width:1385px;height:1px;background:#a0a0a0"></div>
<div class="ab" style="left:35px;top:820px;width:1385px;height:21px;background:#efefef"></div>
<div class="ab" style="left:58px;top:820px;width:1px;height:21px;background:#a0a0a0"></div>
<div class="ab" style="left:132px;top:822px;width:98px;height:17px;border-left:1px solid #a0a0a0;border-top:1px solid #a0a0a0;border-right:1px solid #fff;border-bottom:1px solid #fff"></div>
<div class="t" style="left:142px;top:824px">共计:<span class="m">59</span>条明细</div>
<div class="ab" style="left:34px;top:841px;width:1403px;height:1px;background:#a0a0a0"></div>
<div class="ab" style="left:1420px;top:276px;width:17px;height:565px;background:repeating-conic-gradient(#f4f4f4 0 25%,#fcfcfc 0 50%) 0 0/2px 2px"></div>
<div class="ab" style="left:1420px;top:277px;width:17px;height:16px;background:#efefef;border-right:1px solid #a0a0a0;border-bottom:1px solid #a0a0a0"></div>
<div class="ab" style="left:1424px;top:282px;width:0;height:0;border-left:4.5px solid transparent;border-right:4.5px solid transparent;border-bottom:5px solid #000"></div>
<div class="ab" style="left:1420px;top:293px;width:17px;height:198px;background:#efefef;border-right:1px solid #a0a0a0;border-bottom:1px solid #a0a0a0"></div>
<div class="ab" style="left:1420px;top:825px;width:17px;height:17px;background:#efefef;border-right:1px solid #a0a0a0;border-bottom:1px solid #a0a0a0"></div>
<div class="ab" style="left:1424px;top:831px;width:0;height:0;border-left:4.5px solid transparent;border-right:4.5px solid transparent;border-top:5px solid #000"></div>
<div class="ab" style="left:1437px;top:275px;width:1px;height:585px;background:#fff"></div>
<div class="ab" style="left:35px;top:842px;width:1385px;height:17px;background:repeating-conic-gradient(#f4f4f4 0 25%,#fcfcfc 0 50%) 0 0/2px 2px"></div>
<div class="ab" style="left:35px;top:842px;width:16px;height:17px;background:#efefef;border-right:1px solid #a0a0a0;border-bottom:1px solid #a0a0a0"></div>
<div class="ab" style="left:40px;top:846px;width:0;height:0;border-top:4.5px solid transparent;border-bottom:4.5px solid transparent;border-right:5px solid #000"></div>
<div class="ab" style="left:51px;top:842px;width:1062px;height:17px;background:#efefef;border-right:1px solid #a0a0a0;border-bottom:1px solid #a0a0a0"></div>
<div class="ab" style="left:1403px;top:842px;width:17px;height:17px;background:#efefef;border-right:1px solid #a0a0a0;border-bottom:1px solid #a0a0a0"></div>
<div class="ab" style="left:1409px;top:846px;width:0;height:0;border-top:4.5px solid transparent;border-bottom:4.5px solid transparent;border-left:5px solid #000"></div>
<div class="ab" style="left:1420px;top:842px;width:17px;height:17px;background:#efefef"></div>
<div class="ab" style="left:34px;top:859px;width:1404px;height:1px;background:#fff"></div>
<div class="ab" style="left:0;top:860px;width:1440px;height:30px;background:#282c35"></div>
<svg class="ab" style="left:0;top:859px" width="1440" height="31" viewBox="0 0 1440 31">
<g fill="#f0f0f0"><path d="M11.5 9.5 L21 9.5 L18.5 6.5 L19.5 6.5 L24.8 11 L11.5 11 Z"/><path d="M24.5 14.8 L15 14.8 L17.5 18.5 L16.5 18.5 L11.2 16.3 L24.5 16.3 Z"/></g>
<g fill="#f2b800"><rect x="40" y="9" width="16" height="4"/><rect x="40" y="14" width="16" height="4"/><rect x="40" y="19" width="16" height="4"/></g>
<g fill="#282c35"><rect x="42" y="10" width="2" height="2"/><rect x="42" y="15" width="2" height="2"/><rect x="42" y="20" width="2" height="2"/><rect x="46" y="11" width="8" height="1"/><rect x="46" y="16" width="8" height="1"/><rect x="46" y="21" width="8" height="1"/></g>
<g fill="#f5c400"><ellipse cx="245" cy="11.5" rx="6" ry="2.8"/><ellipse cx="252" cy="10.5" rx="5" ry="2.5"/><rect x="239" y="15" width="6" height="3" rx="1.5"/><rect x="239" y="19" width="6" height="3.5" rx="1.5"/><rect x="252" y="14" width="5" height="3" rx="1.5"/><rect x="252" y="18" width="5" height="3" rx="1.5"/><circle cx="248.5" cy="19" r="4"/></g><g fill="#8a7000"><circle cx="247.5" cy="17.5" r="0.8"/><circle cx="250" cy="19.5" r="0.8"/></g>
<g fill="#f2b800"><path d="M445 7 L449 7 L449 13 L452 13 L447 18 L442 13 L445 13 Z"/><path d="M439 15 L441 15 L441 20 L453 20 L453 15 L455 15 L455 22 L439 22 Z"/></g>
<path d="M523 15 L528 20 L537 9" stroke="#f2b800" stroke-width="3" fill="none"/>
<g fill="#f2b800"><circle cx="680" cy="12" r="5"/><path d="M672 24 Q672 17 680 17 Q688 17 688 24 Z"/><rect x="674" y="10" width="12" height="2"/></g>
<g fill="#f2b800"><path d="M758 14 L770 14 L770 25 L758 25 Z"/></g><path d="M760.5 14 L760.5 11 Q764 6 767.5 11 L767.5 14" stroke="#f2b800" stroke-width="2" fill="none"/><rect x="763" y="18" width="2" height="4" fill="#282c35"/>
<circle cx="1271" cy="15" r="8.2" fill="none" stroke="#f2b800" stroke-width="1.6"/><circle cx="1271" cy="12" r="3" fill="#f2b800"/><path d="M1265 20 Q1266 16 1271 16 Q1276 16 1277 20 Z" fill="#f2b800"/>
<path d="M1359 12 L1366 12 L1366 9 L1370 13.5 L1366 17 L1366 14.5 L1361 14.5 Z" fill="#f2b800"/><path d="M1366 18 L1359 18 L1359 15 L1355 19.5 L1359 23 L1359 20.5 L1364 20.5 Z" fill="#f2b800"/>
</svg>
<div class="t" style="left:60px;top:867px;color:#fff;font-size:13px">服务器:<span class="m" style="font-size:12px;letter-spacing:-0.2px">127.0.0.1:7798</span></div>
<div class="t" style="left:260px;top:867px;color:#fff;font-size:13px">账套：演示账套</div>
<div class="t" style="left:460px;top:867px;color:#fff;font-size:13px">导入证书</div>
<div class="t" style="left:543px;top:867px;color:#9be23c;font-size:13px">正版授权|终身使用</div>
<div class="t" style="left:693px;top:867px;color:#fff;font-size:13px">在线客服</div>
<div class="t" style="left:777px;top:867px;color:#fff;font-size:13px">锁屏</div>
<div class="t" style="left:1285px;top:867px;color:#fff;font-size:13px">超级用户</div>
<div class="t" style="left:1375px;top:867px;color:#fff;font-size:13px">切换用户</div>
</body></html>
